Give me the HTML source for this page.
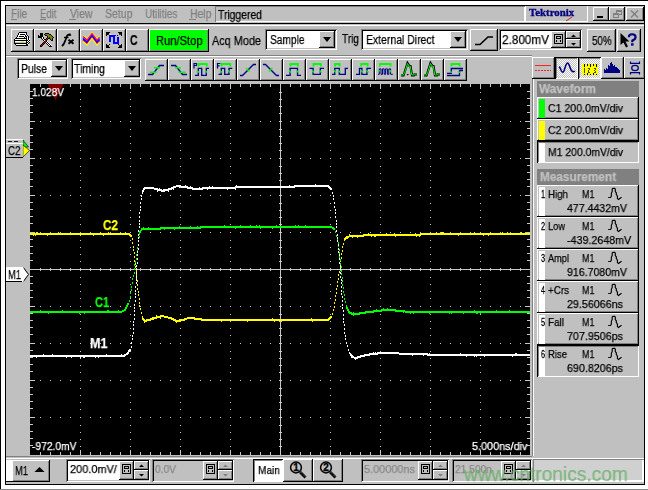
<!DOCTYPE html>
<html><head><meta charset="utf-8"><style>
html,body{margin:0;padding:0;background:#fff;}
body{width:648px;height:490px;position:relative;overflow:hidden;font-family:"Liberation Sans",sans-serif;}
body>div,body>span,body>svg{position:absolute;}
.t{white-space:nowrap;will-change:transform;-webkit-text-stroke-width:0.25px;}
</style></head><body>
<div style="left:0;top:0;width:648px;height:1px;background:#000"></div>
<div style="left:0;top:0;width:1px;height:490px;background:#000"></div>
<div style="left:0;top:489px;width:648px;height:1px;background:#888"></div>
<div style="left:5px;top:5px;width:640px;height:480px;background:#c0c0c0;box-shadow:inset 0 0 0 1px #000;"></div>
<span class="t" style="left:11.00px;top:8px;font-size:12.50px;line-height:12.50px;color:#808080;font-weight:normal;transform:scaleX(0.7950);transform-origin:0 0;">File</span>
<span class="t" style="left:40.00px;top:8px;font-size:12.50px;line-height:12.50px;color:#808080;font-weight:normal;transform:scaleX(0.7652);transform-origin:0 0;">Edit</span>
<span class="t" style="left:69.50px;top:8px;font-size:12.50px;line-height:12.50px;color:#808080;font-weight:normal;transform:scaleX(0.8372);transform-origin:0 0;">View</span>
<span class="t" style="left:104.50px;top:8px;font-size:12.50px;line-height:12.50px;color:#808080;font-weight:normal;transform:scaleX(0.8413);transform-origin:0 0;">Setup</span>
<span class="t" style="left:144.50px;top:8px;font-size:12.50px;line-height:12.50px;color:#808080;font-weight:normal;transform:scaleX(0.8062);transform-origin:0 0;">Utilities</span>
<span class="t" style="left:189.50px;top:8px;font-size:12.50px;line-height:12.50px;color:#808080;font-weight:normal;transform:scaleX(0.8370);transform-origin:0 0;">Help</span>
<div style="left:11px;top:19px;width:6px;height:1px;background:#808080"></div>
<div style="left:40px;top:19px;width:6px;height:1px;background:#808080"></div>
<div style="left:69px;top:19px;width:7px;height:1px;background:#808080"></div>
<div style="left:189px;top:19px;width:7px;height:1px;background:#808080"></div>
<div style="left:215px;top:6px;width:310px;height:16px;background:#c0c0c0;box-shadow:inset 1px 1px #808080,inset -1px -1px #fff;"></div>
<span class="t" style="left:218.00px;top:9px;font-size:12.50px;line-height:12.50px;color:#000;font-weight:normal;transform:scaleX(0.8292);transform-origin:0 0;">Triggered</span>
<div style="left:525px;top:6px;width:63px;height:16px;background:#c0c0c0;box-shadow:inset 1px 0 #fff,inset -1px 0 #fff,inset 0 -1px #fff;"></div>
<span class="t" style="left:528.50px;top:8px;font-size:10.60px;line-height:10.60px;color:#000080;font-weight:bold;transform:scaleX(1.0233);transform-origin:0 0;font-family:'Liberation Serif',serif;-webkit-text-stroke:0.3px #000080;">Tektronix</span>
<svg style="left:565px;top:16px" width="8" height="6"><line x1="1" y1="5" x2="7" y2="1" stroke="#e02020" stroke-width="1"/></svg>
<div style="left:593px;top:7px;width:16px;height:14px;background:#c0c0c0;box-shadow:inset -1px -1px #000,inset 1px 1px #fff,inset -2px -2px #808080;"></div>
<div style="left:609px;top:7px;width:16px;height:14px;background:#c0c0c0;box-shadow:inset -1px -1px #000,inset 1px 1px #fff,inset -2px -2px #808080;"></div>
<div style="left:626px;top:7px;width:18px;height:14px;background:#c0c0c0;box-shadow:inset -1px -1px #000,inset 1px 1px #fff,inset -2px -2px #808080;"></div>
<div style="left:597px;top:16px;width:6px;height:2px;background:#000"></div>
<svg style="left:609px;top:7px;" width="16" height="14" viewBox="0 0 16 14"><g fill="none" stroke="#808080" stroke-width="1" shape-rendering="crispEdges"><rect x="7.5" y="3.5" width="5" height="4"/><rect x="4.5" y="6.5" width="5" height="4" fill="#c0c0c0"/><line x1="7" y1="4.5" x2="13" y2="4.5"/><line x1="4" y1="7.5" x2="10" y2="7.5"/></g></svg>
<svg style="left:626px;top:7px;" width="18" height="14" viewBox="0 0 18 14"><g stroke="#808080" stroke-width="1.4"><line x1="5" y1="3.5" x2="12" y2="10.5"/><line x1="12" y1="3.5" x2="5" y2="10.5"/></g></svg>
<div style="left:6px;top:23px;width:638px;height:1px;background:#000"></div>
<div style="left:6px;top:25px;width:638px;height:1px;background:#fff"></div>
<div style="left:11px;top:29px;width:23px;height:23px;background:#c0c0c0;box-shadow:inset -1px -1px #000,inset 1px 1px #fff,inset -2px -2px #808080;"></div>
<div style="left:34px;top:29px;width:23px;height:23px;background:#c0c0c0;box-shadow:inset -1px -1px #000,inset 1px 1px #fff,inset -2px -2px #808080;"></div>
<div style="left:57px;top:29px;width:23px;height:23px;background:#c0c0c0;box-shadow:inset -1px -1px #000,inset 1px 1px #fff,inset -2px -2px #808080;"></div>
<div style="left:80px;top:29px;width:23px;height:23px;background:#c0c0c0;box-shadow:inset -1px -1px #000,inset 1px 1px #fff,inset -2px -2px #808080;"></div>
<div style="left:103px;top:29px;width:23px;height:23px;background:#c0c0c0;box-shadow:inset -1px -1px #000,inset 1px 1px #fff,inset -2px -2px #808080;"></div>
<div style="left:126px;top:29px;width:23px;height:23px;background:#c0c0c0;box-shadow:inset -1px -1px #000,inset 1px 1px #fff,inset -2px -2px #808080;"></div>
<svg style="left:11px;top:29px;" width="19" height="17" viewBox="0 0 19 17"><g shape-rendering="crispEdges"><rect x="8" y="3" width="8" height="1" fill="#000"/><rect x="7" y="4" width="1" height="1" fill="#000"/><rect x="8" y="4" width="7" height="1" fill="#fff"/><rect x="15" y="4" width="1" height="1" fill="#000"/><rect x="7" y="5" width="1" height="1" fill="#000"/><rect x="8" y="5" width="1" height="1" fill="#fff"/><rect x="9" y="5" width="5" height="1" fill="#000"/><rect x="14" y="5" width="1" height="1" fill="#fff"/><rect x="15" y="5" width="1" height="1" fill="#000"/><rect x="6" y="6" width="1" height="1" fill="#000"/><rect x="7" y="6" width="7" height="1" fill="#fff"/><rect x="14" y="6" width="1" height="1" fill="#000"/><rect x="15" y="6" width="1" height="1" fill="#fff"/><rect x="16" y="6" width="1" height="1" fill="#000"/><rect x="6" y="7" width="1" height="1" fill="#000"/><rect x="7" y="7" width="1" height="1" fill="#fff"/><rect x="8" y="7" width="5" height="1" fill="#000"/><rect x="13" y="7" width="1" height="1" fill="#fff"/><rect x="14" y="7" width="2" height="1" fill="#000"/><rect x="16" y="7" width="1" height="1" fill="#fff"/><rect x="17" y="7" width="1" height="1" fill="#000"/><rect x="5" y="8" width="1" height="1" fill="#000"/><rect x="6" y="8" width="7" height="1" fill="#fff"/><rect x="13" y="8" width="1" height="1" fill="#000"/><rect x="14" y="8" width="1" height="1" fill="#fff"/><rect x="15" y="8" width="1" height="1" fill="#000"/><rect x="16" y="8" width="1" height="1" fill="#fff"/><rect x="17" y="8" width="1" height="1" fill="#000"/><rect x="4" y="9" width="12" height="1" fill="#000"/><rect x="16" y="9" width="1" height="1" fill="#fff"/><rect x="17" y="9" width="1" height="1" fill="#000"/><rect x="18" y="9" width="1" height="1" fill="#fff"/><rect x="3" y="10" width="1" height="1" fill="#000"/><rect x="4" y="10" width="11" height="1" fill="#fff"/><rect x="15" y="10" width="1" height="1" fill="#000"/><rect x="16" y="10" width="1" height="1" fill="#fff"/><rect x="17" y="10" width="1" height="1" fill="#000"/><rect x="18" y="10" width="1" height="1" fill="#fff"/><rect x="3" y="11" width="14" height="1" fill="#000"/><rect x="17" y="11" width="1" height="1" fill="#fff"/><rect x="18" y="11" width="1" height="1" fill="#000"/><rect x="3" y="12" width="1" height="1" fill="#000"/><rect x="4" y="12" width="6" height="1" fill="#fff"/><rect x="10" y="12" width="3" height="1" fill="#ffff00"/><rect x="13" y="12" width="2" height="1" fill="#fff"/><rect x="15" y="12" width="1" height="1" fill="#000"/><rect x="16" y="12" width="1" height="1" fill="#fff"/><rect x="17" y="12" width="1" height="1" fill="#000"/><rect x="18" y="12" width="1" height="1" fill="#fff"/><rect x="3" y="13" width="1" height="1" fill="#000"/><rect x="4" y="13" width="11" height="1" fill="#c0c0c0"/><rect x="15" y="13" width="2" height="1" fill="#000"/><rect x="17" y="13" width="1" height="1" fill="#fff"/><rect x="18" y="13" width="1" height="1" fill="#000"/><rect x="3" y="14" width="13" height="1" fill="#000"/><rect x="16" y="14" width="1" height="1" fill="#fff"/><rect x="17" y="14" width="1" height="1" fill="#000"/><rect x="4" y="15" width="1" height="1" fill="#000"/><rect x="5" y="15" width="10" height="1" fill="#fff"/><rect x="15" y="15" width="2" height="1" fill="#000"/><rect x="17" y="15" width="1" height="1" fill="#fff"/><rect x="5" y="16" width="12" height="1" fill="#000"/></g></svg>
<svg style="left:34px;top:29px;" width="20" height="18" viewBox="0 0 20 18"><g shape-rendering="crispEdges"><rect x="6" y="4" width="3" height="1" fill="#000"/><rect x="11" y="4" width="4" height="1" fill="#000"/><rect x="6" y="5" width="3" height="1" fill="#000"/><rect x="10" y="5" width="1" height="1" fill="#000"/><rect x="11" y="5" width="4" height="1" fill="#808000"/><rect x="15" y="5" width="2" height="1" fill="#000"/><rect x="4" y="6" width="1" height="1" fill="#000"/><rect x="6" y="6" width="3" height="1" fill="#000"/><rect x="11" y="6" width="2" height="1" fill="#000"/><rect x="13" y="6" width="4" height="1" fill="#808000"/><rect x="17" y="6" width="1" height="1" fill="#000"/><rect x="4" y="7" width="5" height="1" fill="#000"/><rect x="13" y="7" width="1" height="1" fill="#000"/><rect x="14" y="7" width="4" height="1" fill="#808000"/><rect x="18" y="7" width="1" height="1" fill="#000"/><rect x="4" y="8" width="4" height="1" fill="#000"/><rect x="8" y="8" width="1" height="1" fill="#fff"/><rect x="9" y="8" width="1" height="1" fill="#000"/><rect x="13" y="8" width="1" height="1" fill="#000"/><rect x="14" y="8" width="1" height="1" fill="#808000"/><rect x="15" y="8" width="1" height="1" fill="#000"/><rect x="16" y="8" width="3" height="1" fill="#808000"/><rect x="19" y="8" width="1" height="1" fill="#000"/><rect x="7" y="9" width="1" height="1" fill="#000"/><rect x="8" y="9" width="1" height="1" fill="#fff"/><rect x="9" y="9" width="1" height="1" fill="#000"/><rect x="12" y="9" width="1" height="1" fill="#000"/><rect x="13" y="9" width="1" height="1" fill="#c00000"/><rect x="14" y="9" width="2" height="1" fill="#000"/><rect x="16" y="9" width="2" height="1" fill="#808000"/><rect x="18" y="9" width="1" height="1" fill="#000"/><rect x="8" y="10" width="1" height="1" fill="#000"/><rect x="9" y="10" width="1" height="1" fill="#fff"/><rect x="10" y="10" width="2" height="1" fill="#000"/><rect x="12" y="10" width="1" height="1" fill="#c00000"/><rect x="13" y="10" width="1" height="1" fill="#000"/><rect x="16" y="10" width="1" height="1" fill="#000"/><rect x="17" y="10" width="1" height="1" fill="#808000"/><rect x="18" y="10" width="1" height="1" fill="#000"/><rect x="9" y="11" width="1" height="1" fill="#000"/><rect x="10" y="11" width="1" height="1" fill="#fff"/><rect x="11" y="11" width="1" height="1" fill="#c00000"/><rect x="12" y="11" width="1" height="1" fill="#000"/><rect x="17" y="11" width="2" height="1" fill="#000"/><rect x="10" y="12" width="1" height="1" fill="#000"/><rect x="11" y="12" width="1" height="1" fill="#c00000"/><rect x="12" y="12" width="1" height="1" fill="#000"/><rect x="13" y="12" width="1" height="1" fill="#fff"/><rect x="9" y="13" width="1" height="1" fill="#000"/><rect x="10" y="13" width="1" height="1" fill="#c00000"/><rect x="11" y="13" width="1" height="1" fill="#000"/><rect x="12" y="13" width="1" height="1" fill="#fff"/><rect x="13" y="13" width="1" height="1" fill="#000"/><rect x="14" y="13" width="1" height="1" fill="#fff"/><rect x="8" y="14" width="1" height="1" fill="#000"/><rect x="9" y="14" width="1" height="1" fill="#c00000"/><rect x="10" y="14" width="1" height="1" fill="#000"/><rect x="12" y="14" width="1" height="1" fill="#000"/><rect x="13" y="14" width="1" height="1" fill="#fff"/><rect x="14" y="14" width="1" height="1" fill="#000"/><rect x="15" y="14" width="1" height="1" fill="#fff"/><rect x="7" y="15" width="1" height="1" fill="#000"/><rect x="8" y="15" width="1" height="1" fill="#c00000"/><rect x="9" y="15" width="1" height="1" fill="#000"/><rect x="13" y="15" width="1" height="1" fill="#000"/><rect x="14" y="15" width="1" height="1" fill="#fff"/><rect x="15" y="15" width="1" height="1" fill="#000"/><rect x="16" y="15" width="1" height="1" fill="#fff"/><rect x="6" y="16" width="1" height="1" fill="#000"/><rect x="7" y="16" width="1" height="1" fill="#c00000"/><rect x="8" y="16" width="1" height="1" fill="#000"/><rect x="14" y="16" width="1" height="1" fill="#000"/><rect x="15" y="16" width="1" height="1" fill="#fff"/><rect x="16" y="16" width="1" height="1" fill="#000"/><rect x="17" y="16" width="1" height="1" fill="#fff"/><rect x="6" y="17" width="2" height="1" fill="#000"/><rect x="15" y="17" width="3" height="1" fill="#000"/></g></svg>
<svg style="left:57px;top:29px;" width="23" height="23" viewBox="0 0 23 23"><g fill="none" stroke="#000"><path d="M5 17 L6.5 15.5 L8.5 11 L10 7 Q11 5.3 13 5.5 L13.5 6.8" stroke-width="1.8"/><path d="M7 8.5H11.5" stroke-width="1.3"/><path d="M11.5 10.8 L16.5 14.8 M16.5 10.8 L11.5 14.8" stroke-width="2"/></g></svg>
<svg style="left:80px;top:29px;" width="23" height="23" viewBox="0 0 23 23"><polyline points="3,6.5 7,10 12,3.5 17,10 19.5,7" fill="none" stroke="#ffff00" stroke-width="1.15"/><polyline points="3,7.5 7,11 12,4.5 17,11 19.5,8" fill="none" stroke="#ff0000" stroke-width="1.15"/><polyline points="3,8.5 7,12 12,5.5 17,12 19.5,9" fill="none" stroke="#ff00ff" stroke-width="1.15"/><polyline points="3,9.5 7,13 12,6.5 17,13 19.5,10" fill="none" stroke="#0000ff" stroke-width="1.15"/><polyline points="3,10.5 7,14 12,7.5 17,14 19.5,11" fill="none" stroke="#0000ff" stroke-width="1.15"/><polyline points="3,11.5 7,15 12,8.5 17,15 19.5,12" fill="none" stroke="#ff0000" stroke-width="1.15"/><polyline points="3,12.5 7,16 12,9.5 17,16 19.5,13" fill="none" stroke="#ffff00" stroke-width="1.15"/></svg>
<svg style="left:103px;top:29px;" width="19" height="19" viewBox="0 0 19 19"><g shape-rendering="crispEdges"><rect x="3" y="3" width="4" height="1" fill="#000"/><rect x="15" y="3" width="4" height="1" fill="#000"/><rect x="3" y="4" width="3" height="1" fill="#000"/><rect x="16" y="4" width="3" height="1" fill="#000"/><rect x="3" y="5" width="3" height="1" fill="#000"/><rect x="7" y="5" width="1" height="1" fill="#fff"/><rect x="16" y="5" width="3" height="1" fill="#000"/><rect x="3" y="6" width="1" height="1" fill="#000"/><rect x="6" y="6" width="1" height="1" fill="#000"/><rect x="7" y="6" width="6" height="1" fill="#0000ff"/><rect x="14" y="6" width="1" height="1" fill="#000"/><rect x="18" y="6" width="1" height="1" fill="#000"/><rect x="6" y="7" width="6" height="1" fill="#0000ff"/><rect x="6" y="8" width="2" height="1" fill="#0000ff"/><rect x="10" y="8" width="2" height="1" fill="#0000ff"/><rect x="14" y="8" width="2" height="1" fill="#0000ff"/><rect x="6" y="9" width="2" height="1" fill="#0000ff"/><rect x="10" y="9" width="2" height="1" fill="#0000ff"/><rect x="14" y="9" width="2" height="1" fill="#0000ff"/><rect x="6" y="10" width="2" height="1" fill="#0000ff"/><rect x="10" y="10" width="2" height="1" fill="#0000ff"/><rect x="14" y="10" width="2" height="1" fill="#0000ff"/><rect x="6" y="11" width="2" height="1" fill="#0000ff"/><rect x="10" y="11" width="2" height="1" fill="#0000ff"/><rect x="14" y="11" width="2" height="1" fill="#0000ff"/><rect x="6" y="12" width="2" height="1" fill="#0000ff"/><rect x="10" y="12" width="2" height="1" fill="#0000ff"/><rect x="14" y="12" width="2" height="1" fill="#0000ff"/><rect x="10" y="13" width="6" height="1" fill="#0000ff"/><rect x="10" y="14" width="6" height="1" fill="#0000ff"/><rect x="3" y="15" width="1" height="1" fill="#000"/><rect x="6" y="15" width="1" height="1" fill="#000"/><rect x="15" y="15" width="1" height="1" fill="#000"/><rect x="18" y="15" width="1" height="1" fill="#000"/><rect x="3" y="16" width="3" height="1" fill="#000"/><rect x="16" y="16" width="3" height="1" fill="#000"/><rect x="3" y="17" width="3" height="1" fill="#000"/><rect x="16" y="17" width="3" height="1" fill="#000"/><rect x="3" y="18" width="4" height="1" fill="#000"/><rect x="15" y="18" width="4" height="1" fill="#000"/></g></svg>
<svg style="left:103px;top:29px;opacity:0.35" width="23" height="23" viewBox="0 0 23 23"><rect x="5.5" y="5.5" width="12" height="11" fill="none" stroke="#e8dcb0" stroke-width="0.7"/></svg>
<span class="t" style="left:130.00px;top:33px;font-size:14.20px;line-height:14.20px;color:#000;font-weight:bold;transform:scaleX(0.7336);transform-origin:0 0;">C</span>
<div style="left:149px;top:29px;width:60px;height:23px;background:#00ff00;box-shadow:inset -1px -1px #000,inset 1px 1px #fff,inset -2px -2px #808080;"></div>
<span class="t" style="left:155.50px;top:35px;font-size:12.50px;line-height:12.50px;color:#000;font-weight:normal;transform:scaleX(0.8921);transform-origin:0 0;">Run/Stop</span>
<span class="t" style="left:212.00px;top:35px;font-size:12.50px;line-height:12.50px;color:#000;font-weight:normal;transform:scaleX(0.8701);transform-origin:0 0;">Acq Mode</span>
<div style="left:265px;top:29px;width:72px;height:21px;background:#fff;box-shadow:inset 1px 1px #808080,inset -1px -1px #fff,inset 2px 2px #000,inset -2px -2px #c0c0c0;"></div>
<span class="t" style="left:269.50px;top:34px;font-size:12.50px;line-height:12.50px;color:#000;font-weight:normal;transform:scaleX(0.8142);transform-origin:0 0;">Sample</span>
<div style="left:319px;top:31px;width:16px;height:17px;background:#c0c0c0;box-shadow:inset -1px -1px #000,inset 1px 1px #fff,inset -2px -2px #808080;"></div>
<svg style="left:319px;top:31px;" width="16" height="17" viewBox="0 0 16 17"><path d="M4 6h8l-4 5z" fill="#000"/></svg>
<span class="t" style="left:342.00px;top:33px;font-size:12.50px;line-height:12.50px;color:#000;font-weight:normal;transform:scaleX(0.8071);transform-origin:0 0;">Trig</span>
<div style="left:361px;top:29px;width:107px;height:21px;background:#fff;box-shadow:inset 1px 1px #808080,inset -1px -1px #fff,inset 2px 2px #000,inset -2px -2px #c0c0c0;"></div>
<span class="t" style="left:366.00px;top:34px;font-size:12.50px;line-height:12.50px;color:#000;font-weight:normal;transform:scaleX(0.8354);transform-origin:0 0;">External Direct</span>
<div style="left:450px;top:31px;width:16px;height:17px;background:#c0c0c0;box-shadow:inset -1px -1px #000,inset 1px 1px #fff,inset -2px -2px #808080;"></div>
<svg style="left:450px;top:31px;" width="16" height="17" viewBox="0 0 16 17"><path d="M4 6h8l-4 5z" fill="#000"/></svg>
<div style="left:470px;top:29px;width:28px;height:22px;background:#c0c0c0;box-shadow:inset -1px -1px #000,inset 1px 1px #fff,inset -2px -2px #808080;"></div>
<svg style="left:470px;top:29px;" width="28" height="22" viewBox="0 0 28 22"><path d="M5 15.5H10L18 8H23" fill="none" stroke="#000" stroke-width="1.6"/></svg>
<div style="left:499px;top:29px;width:83px;height:21px;background:#fff;box-shadow:inset 1px 1px #808080,inset -1px -1px #fff,inset 2px 2px #000,inset -2px -2px #c0c0c0;"></div>
<span class="t" style="left:502.00px;top:34px;font-size:12.50px;line-height:12.50px;color:#000;font-weight:normal;transform:scaleX(0.9388);transform-origin:0 0;">2.800mV</span>
<div style="left:551px;top:31px;width:15px;height:17px;background:#c0c0c0;box-shadow:inset -1px -1px #000,inset 1px 1px #fff,inset -2px -2px #808080;"></div>
<svg style="left:551px;top:31px;" width="15" height="17" viewBox="0 0 15 17"><g shape-rendering="crispEdges" fill="none" stroke="#000"><rect x="3.5" y="3.5" width="8" height="9"/><rect x="5.5" y="5.5" width="4" height="2"/></g><rect x="5" y="9" width="1" height="2" fill="#000"/><rect x="9" y="9" width="1" height="2" fill="#000"/></svg>
<div style="left:566px;top:31px;width:15px;height:8px;background:#c0c0c0;box-shadow:inset -1px -1px #000,inset 1px 1px #fff,inset -2px -2px #808080;"></div>
<div style="left:566px;top:39px;width:15px;height:9px;background:#c0c0c0;box-shadow:inset -1px -1px #000,inset 1px 1px #fff,inset -2px -2px #808080;"></div>
<svg style="left:566px;top:31px;" width="15" height="17" viewBox="0 0 15 17"><path d="M5 6h5l-2.5-2.5z M5 12h5l-2.5 2.5z" fill="#000"/></svg>
<div style="left:587px;top:29px;width:29px;height:23px;background:#c0c0c0;box-shadow:inset -1px -1px #000,inset 1px 1px #fff,inset -2px -2px #808080;"></div>
<span class="t" style="left:592.00px;top:35px;font-size:12.50px;line-height:12.50px;color:#000;font-weight:normal;transform:scaleX(0.7800);transform-origin:0 0;">50%</span>
<div style="left:617px;top:29px;width:24px;height:23px;background:#c0c0c0;box-shadow:inset -1px -1px #000,inset 1px 1px #fff,inset -2px -2px #808080;"></div>
<svg style="left:617px;top:29px;" width="24" height="23" viewBox="0 0 24 23"><path d="M3.5 4 L3.5 16 L6.5 13.5 L9 18.5 L11 17.5 L8.5 12.5 L12.5 12.5 Z" fill="#000"/></svg>
<svg style="left:617px;top:29px;" width="24" height="23" viewBox="0 0 24 23"><path d="M11.8 8.3Q11.8 5.3 15 5.3Q18.6 5.3 18.6 8.3Q18.6 10.3 15.3 11.6V13.3" fill="none" stroke="#000080" stroke-width="2.1"/><rect x="14" y="14.3" width="2.6" height="2.3" fill="#000080"/></svg>
<div style="left:6px;top:55px;width:526px;height:1px;background:#808080"></div>
<div style="left:6px;top:56px;width:526px;height:1px;background:#fff"></div>
<div style="left:17px;top:58px;width:51px;height:21px;background:#fff;box-shadow:inset 1px 1px #808080,inset -1px -1px #fff,inset 2px 2px #000,inset -2px -2px #c0c0c0;"></div>
<span class="t" style="left:20.50px;top:63px;font-size:12.50px;line-height:12.50px;color:#000;font-weight:normal;transform:scaleX(0.8320);transform-origin:0 0;">Pulse</span>
<div style="left:51px;top:60px;width:16px;height:17px;background:#c0c0c0;box-shadow:inset -1px -1px #000,inset 1px 1px #fff,inset -2px -2px #808080;"></div>
<svg style="left:51px;top:60px;" width="16" height="17" viewBox="0 0 16 17"><path d="M4 6h8l-4 5z" fill="#000"/></svg>
<div style="left:71px;top:58px;width:70px;height:21px;background:#fff;box-shadow:inset 1px 1px #808080,inset -1px -1px #fff,inset 2px 2px #000,inset -2px -2px #c0c0c0;"></div>
<span class="t" style="left:74.00px;top:63px;font-size:12.50px;line-height:12.50px;color:#000;font-weight:normal;transform:scaleX(0.8364);transform-origin:0 0;">Timing</span>
<div style="left:124px;top:60px;width:16px;height:17px;background:#c0c0c0;box-shadow:inset -1px -1px #000,inset 1px 1px #fff,inset -2px -2px #808080;"></div>
<svg style="left:124px;top:60px;" width="16" height="17" viewBox="0 0 16 17"><path d="M4 6h8l-4 5z" fill="#000"/></svg>
<div style="left:145px;top:59px;width:23px;height:22px;background:#c0c0c0;box-shadow:inset -1px -1px #000,inset 1px 1px #fff,inset -2px -2px #808080;"></div>
<svg style="left:145px;top:59px;" width="23" height="22" viewBox="0 0 23 22"><path d="M3 15.5H7.5L14.5 6.5H19" fill="none" stroke="#000080" stroke-width="1.3" stroke-linejoin="miter"/><path d="M9 8.7H15M5 13.3H11.5" fill="none" stroke="#00ff00" stroke-width="1.6"/></svg>
<div style="left:168px;top:59px;width:23px;height:22px;background:#c0c0c0;box-shadow:inset -1px -1px #000,inset 1px 1px #fff,inset -2px -2px #808080;"></div>
<svg style="left:168px;top:59px;" width="23" height="22" viewBox="0 0 23 22"><path d="M3 6.5H7.5L14.5 15.5H19" fill="none" stroke="#000080" stroke-width="1.3" stroke-linejoin="miter"/><path d="M7 8.7H13M10.5 13.3H17.5" fill="none" stroke="#00ff00" stroke-width="1.6"/></svg>
<div style="left:191px;top:59px;width:23px;height:22px;background:#c0c0c0;box-shadow:inset -1px -1px #000,inset 1px 1px #fff,inset -2px -2px #808080;"></div>
<svg style="left:191px;top:59px;" width="23" height="22" viewBox="0 0 23 22"><path d="M3 9.5V4.5H5.5V6.5H3.5" fill="none" stroke="#000080" stroke-width="1.2"/><path d="M4 16.3H7.3V9.3H10.7V16.3H15.3V9.3H18" fill="none" stroke="#000080" stroke-width="1.3" stroke-linejoin="miter"/><path d="M7.5 7.5V5H15.7V7.5" fill="none" stroke="#00ff00" stroke-width="1.8"/><path d="M6 11.5L8 13.5M14 11.5L16 13.5" fill="none" stroke="#00ff00" stroke-width="1.4"/></svg>
<div style="left:214px;top:59px;width:23px;height:22px;background:#c0c0c0;box-shadow:inset -1px -1px #000,inset 1px 1px #fff,inset -2px -2px #808080;"></div>
<svg style="left:214px;top:59px;" width="23" height="22" viewBox="0 0 23 22"><path d="M3.5 9.5V4.5H6.5M3.5 6.8H5.5" fill="none" stroke="#000080" stroke-width="1.2"/><path d="M4.5 15.3H7.3V9.3H10.7V15.3H15V9.3H18.3" fill="none" stroke="#000080" stroke-width="1.3" stroke-linejoin="miter"/><path d="M7.5 7.5V5H16.3V7.5" fill="none" stroke="#00ff00" stroke-width="1.8"/><path d="M6 11.5L8 13.5M14 11.5L16 13.5" fill="none" stroke="#00ff00" stroke-width="1.4"/></svg>
<div style="left:237px;top:59px;width:23px;height:22px;background:#c0c0c0;box-shadow:inset -1px -1px #000,inset 1px 1px #fff,inset -2px -2px #808080;"></div>
<svg style="left:237px;top:59px;" width="23" height="22" viewBox="0 0 23 22"><path d="M3 16.5H5.5L16.5 5.5H19" fill="none" stroke="#000080" stroke-width="1.3" stroke-linejoin="miter"/><path d="M9 9L12.5 12.5" fill="none" stroke="#00ff00" stroke-width="1.5"/></svg>
<div style="left:260px;top:59px;width:23px;height:22px;background:#c0c0c0;box-shadow:inset -1px -1px #000,inset 1px 1px #fff,inset -2px -2px #808080;"></div>
<svg style="left:260px;top:59px;" width="23" height="22" viewBox="0 0 23 22"><path d="M3 5.5H5.5L16.5 16.5H19" fill="none" stroke="#000080" stroke-width="1.3" stroke-linejoin="miter"/><path d="M9 12.5L12.5 9" fill="none" stroke="#00ff00" stroke-width="1.5"/></svg>
<div style="left:283px;top:59px;width:23px;height:22px;background:#c0c0c0;box-shadow:inset -1px -1px #000,inset 1px 1px #fff,inset -2px -2px #808080;"></div>
<svg style="left:283px;top:59px;" width="23" height="22" viewBox="0 0 23 22"><path d="M3 16.3H7.1V9.3H14.5V16.3H18" fill="none" stroke="#000080" stroke-width="1.3" stroke-linejoin="miter"/><path d="M7.5 7.5V5H14.9V7.5" fill="none" stroke="#00ff00" stroke-width="1.8"/><path d="M6 11.5L8 13.5M13.5 11.5L15.5 13.5" fill="none" stroke="#00ff00" stroke-width="1.4"/></svg>
<div style="left:306px;top:59px;width:23px;height:22px;background:#c0c0c0;box-shadow:inset -1px -1px #000,inset 1px 1px #fff,inset -2px -2px #808080;"></div>
<svg style="left:306px;top:59px;" width="23" height="22" viewBox="0 0 23 22"><path d="M3.5 9.3H7.1V15.3H14.3V9.3H18" fill="none" stroke="#000080" stroke-width="1.3" stroke-linejoin="miter"/><path d="M7.5 7.5V5H14.9V7.5" fill="none" stroke="#00ff00" stroke-width="1.8"/><path d="M6 11.5L8 13.5M13.5 11.5L15.5 13.5" fill="none" stroke="#00ff00" stroke-width="1.4"/></svg>
<div style="left:329px;top:59px;width:23px;height:22px;background:#c0c0c0;box-shadow:inset -1px -1px #000,inset 1px 1px #fff,inset -2px -2px #808080;"></div>
<svg style="left:329px;top:59px;" width="23" height="22" viewBox="0 0 23 22"><path d="M3 15.3H5.8V9.3H10.3V15.3H16.3V9.3H19" fill="none" stroke="#000080" stroke-width="1.3" stroke-linejoin="miter"/><path d="M6 7.5V5H10.6V7.5" fill="none" stroke="#00ff00" stroke-width="1.8"/><path d="M5 11.5L7 13.5M9.5 11.5L11.5 13.5" fill="none" stroke="#00ff00" stroke-width="1.4"/></svg>
<div style="left:352px;top:59px;width:23px;height:22px;background:#c0c0c0;box-shadow:inset -1px -1px #000,inset 1px 1px #fff,inset -2px -2px #808080;"></div>
<svg style="left:352px;top:59px;" width="23" height="22" viewBox="0 0 23 22"><path d="M4 15.3H7.5V9.3H9.9V15.3H15V9.3H19" fill="none" stroke="#000080" stroke-width="1.3" stroke-linejoin="miter"/><path d="M9.2 7.5V5H15.6V7.5" fill="none" stroke="#00ff00" stroke-width="1.8"/><path d="M9 11.5L11 13.5M14.5 11.5L16.5 13.5" fill="none" stroke="#00ff00" stroke-width="1.4"/></svg>
<div style="left:375px;top:59px;width:23px;height:22px;background:#c0c0c0;box-shadow:inset -1px -1px #000,inset 1px 1px #fff,inset -2px -2px #808080;"></div>
<svg style="left:375px;top:59px;" width="23" height="22" viewBox="0 0 23 22"><path d="M3 15.3H4.3V9.9H6V15.3H7.5V9.9H9.2V15.3H10.6V9.9H12.4V15.3H13.8V9.9H15.6V15.3H17.8" fill="none" stroke="#000080" stroke-width="1"/><path d="M5 7.5V5H15.6V7.5" fill="none" stroke="#00ff00" stroke-width="1.8"/><path d="M3.5 11L4.5 12.5M15 11.5L16 13" fill="none" stroke="#00ff00" stroke-width="1.4"/></svg>
<div style="left:398px;top:59px;width:23px;height:22px;background:#c0c0c0;box-shadow:inset -1px -1px #000,inset 1px 1px #fff,inset -2px -2px #808080;"></div>
<svg style="left:398px;top:59px;" width="23" height="22" viewBox="0 0 23 22"><path d="M3 16.3H5.5L6.5 13.5L9.5 4L11.5 7H12.5L14 16.3H16L16.5 15.3H19" fill="none" stroke="#000" stroke-width="2.2"/><path d="M3 16H5.5L6.8 13.2L9.5 4.5L11.3 7.3H12.3L13.8 16H16L16.5 15H19" fill="none" stroke="#00ff00" stroke-width="1"/><path d="M8.5 15H11L9.7 16.5Z" fill="#000"/></svg>
<div style="left:421px;top:59px;width:23px;height:22px;background:#c0c0c0;box-shadow:inset -1px -1px #000,inset 1px 1px #fff,inset -2px -2px #808080;"></div>
<svg style="left:421px;top:59px;" width="23" height="22" viewBox="0 0 23 22"><path d="M3 16.3H5.5L6.5 13.5L9.5 4L11.5 7H12.5L14 16.3H16L16.5 15.3H19" fill="none" stroke="#000" stroke-width="2.2"/><path d="M3 16H5.5L6.8 13.2L9.5 4.5L11.3 7.3H12.3L13.8 16H16L16.5 15H19" fill="none" stroke="#00ff00" stroke-width="1"/></svg>
<div style="left:444px;top:59px;width:23px;height:22px;background:#c0c0c0;box-shadow:inset -1px -1px #000,inset 1px 1px #fff,inset -2px -2px #808080;"></div>
<svg style="left:444px;top:59px;" width="23" height="22" viewBox="0 0 23 22"><path d="M3 14.3H7.3V9.5H19M15.3 11.5H19M3 16.5H15.5V11.5" fill="none" stroke="#000080" stroke-width="1.3" stroke-linejoin="miter"/><path d="M7.5 7.5V5H15.6V7.5" fill="none" stroke="#00ff00" stroke-width="1.8"/><path d="M6.5 12L7.5 14M14.5 12L15.5 14" fill="none" stroke="#00ff00" stroke-width="1.4"/></svg>
<div style="left:532px;top:57px;width:23px;height:22px;background:#c0c0c0;box-shadow:inset -1px -1px #000,inset 1px 1px #fff,inset -2px -2px #808080;"></div>
<svg style="left:532px;top:57px;" width="23" height="22" viewBox="0 0 23 22"><g shape-rendering="crispEdges"><rect x="3" y="8" width="16" height="1" fill="#ff2020"/><path d="M3 13h2v1h-2zM6 13h2v1h-2zM9 13h2v1h-2zM12 13h2v1h-2zM15 13h2v1h-2zM18 13h1v1h-1z" fill="#ff2020"/></g></svg>
<div style="left:555px;top:57px;width:23px;height:22px;background-color:#ffffff;background-image:linear-gradient(45deg,#c0c0c0 25%,transparent 25%,transparent 75%,#c0c0c0 75%),linear-gradient(45deg,#c0c0c0 25%,transparent 25%,transparent 75%,#c0c0c0 75%);background-size:2px 2px;background-position:0 0,1px 1px;box-shadow:inset 1px 1px #000,inset -1px -1px #fff,inset 2px 2px #808080;"></div>
<svg style="left:555px;top:57px;" width="23" height="22" viewBox="0 0 23 22"><path d="M4.3 9.5C5.5 11.5 6.5 15.5 8 15.3C9.5 15 10.5 6 12.5 6C14.3 6 15 12 16.5 13.5C17.5 14.8 18.5 15.2 19.8 14" fill="none" stroke="#000080" stroke-width="1.6"/></svg>
<div style="left:578px;top:57px;width:23px;height:22px;background-color:#ffffff;background-image:linear-gradient(45deg,#c0c0c0 25%,transparent 25%,transparent 75%,#c0c0c0 75%),linear-gradient(45deg,#c0c0c0 25%,transparent 25%,transparent 75%,#c0c0c0 75%);background-size:2px 2px;background-position:0 0,1px 1px;box-shadow:inset 1px 1px #000,inset -1px -1px #fff,inset 2px 2px #808080;"></div>
<svg style="left:578px;top:57px;" width="21" height="19" viewBox="0 0 21 19"><g shape-rendering="crispEdges"><rect x="4" y="7" width="2" height="1" fill="#ffff00"/><rect x="6" y="7" width="1" height="1" fill="#000"/><rect x="7" y="7" width="2" height="1" fill="#ffff00"/><rect x="9" y="7" width="1" height="1" fill="#000"/><rect x="10" y="7" width="2" height="1" fill="#ffff00"/><rect x="12" y="7" width="1" height="1" fill="#000"/><rect x="13" y="7" width="2" height="1" fill="#ffff00"/><rect x="15" y="7" width="1" height="1" fill="#000"/><rect x="16" y="7" width="2" height="1" fill="#ffff00"/><rect x="18" y="7" width="1" height="1" fill="#000"/><rect x="19" y="7" width="1" height="1" fill="#ffff00"/><rect x="4" y="8" width="2" height="1" fill="#ffff00"/><rect x="6" y="8" width="1" height="1" fill="#000"/><rect x="7" y="8" width="2" height="1" fill="#ffff00"/><rect x="9" y="8" width="1" height="1" fill="#000"/><rect x="10" y="8" width="2" height="1" fill="#ffff00"/><rect x="12" y="8" width="1" height="1" fill="#000"/><rect x="13" y="8" width="2" height="1" fill="#ffff00"/><rect x="15" y="8" width="1" height="1" fill="#000"/><rect x="16" y="8" width="2" height="1" fill="#ffff00"/><rect x="18" y="8" width="1" height="1" fill="#000"/><rect x="19" y="8" width="1" height="1" fill="#ffff00"/><rect x="4" y="9" width="2" height="1" fill="#ffff00"/><rect x="6" y="9" width="1" height="1" fill="#000"/><rect x="7" y="9" width="5" height="1" fill="#ffff00"/><rect x="12" y="9" width="1" height="1" fill="#000"/><rect x="13" y="9" width="5" height="1" fill="#ffff00"/><rect x="18" y="9" width="1" height="1" fill="#000"/><rect x="19" y="9" width="1" height="1" fill="#ffff00"/><rect x="4" y="10" width="16" height="1" fill="#ffff00"/><rect x="4" y="11" width="2" height="1" fill="#ffff00"/><rect x="6" y="11" width="1" height="1" fill="#505000"/><rect x="7" y="11" width="3" height="1" fill="#ffff00"/><rect x="10" y="11" width="2" height="1" fill="#505000"/><rect x="12" y="11" width="4" height="1" fill="#ffff00"/><rect x="16" y="11" width="2" height="1" fill="#505000"/><rect x="18" y="11" width="2" height="1" fill="#ffff00"/><rect x="4" y="12" width="2" height="1" fill="#ffff00"/><rect x="6" y="12" width="1" height="1" fill="#505000"/><rect x="7" y="12" width="4" height="1" fill="#ffff00"/><rect x="11" y="12" width="1" height="1" fill="#505000"/><rect x="12" y="12" width="5" height="1" fill="#ffff00"/><rect x="17" y="12" width="1" height="1" fill="#505000"/><rect x="18" y="12" width="2" height="1" fill="#ffff00"/><rect x="4" y="13" width="2" height="1" fill="#ffff00"/><rect x="6" y="13" width="1" height="1" fill="#505000"/><rect x="7" y="13" width="3" height="1" fill="#ffff00"/><rect x="10" y="13" width="1" height="1" fill="#505000"/><rect x="11" y="13" width="5" height="1" fill="#ffff00"/><rect x="16" y="13" width="1" height="1" fill="#505000"/><rect x="17" y="13" width="3" height="1" fill="#ffff00"/><rect x="4" y="14" width="2" height="1" fill="#ffff00"/><rect x="6" y="14" width="1" height="1" fill="#505000"/><rect x="7" y="14" width="3" height="1" fill="#ffff00"/><rect x="10" y="14" width="1" height="1" fill="#505000"/><rect x="11" y="14" width="6" height="1" fill="#ffff00"/><rect x="17" y="14" width="1" height="1" fill="#505000"/><rect x="18" y="14" width="2" height="1" fill="#ffff00"/><rect x="4" y="15" width="2" height="1" fill="#ffff00"/><rect x="6" y="15" width="1" height="1" fill="#505000"/><rect x="7" y="15" width="3" height="1" fill="#ffff00"/><rect x="10" y="15" width="2" height="1" fill="#505000"/><rect x="12" y="15" width="4" height="1" fill="#ffff00"/><rect x="16" y="15" width="2" height="1" fill="#505000"/><rect x="18" y="15" width="2" height="1" fill="#ffff00"/><rect x="4" y="16" width="5" height="1" fill="#ffff00"/><rect x="9" y="16" width="1" height="1" fill="#000"/><rect x="10" y="16" width="5" height="1" fill="#ffff00"/><rect x="15" y="16" width="1" height="1" fill="#000"/><rect x="16" y="16" width="4" height="1" fill="#ffff00"/><rect x="4" y="17" width="2" height="1" fill="#ffff00"/><rect x="6" y="17" width="1" height="1" fill="#000"/><rect x="7" y="17" width="2" height="1" fill="#ffff00"/><rect x="9" y="17" width="1" height="1" fill="#000"/><rect x="10" y="17" width="2" height="1" fill="#ffff00"/><rect x="12" y="17" width="1" height="1" fill="#000"/><rect x="13" y="17" width="2" height="1" fill="#ffff00"/><rect x="15" y="17" width="1" height="1" fill="#000"/><rect x="16" y="17" width="2" height="1" fill="#ffff00"/><rect x="18" y="17" width="1" height="1" fill="#000"/><rect x="19" y="17" width="1" height="1" fill="#ffff00"/></g></svg>
<div style="left:601px;top:57px;width:23px;height:22px;background:#c0c0c0;box-shadow:inset -1px -1px #000,inset 1px 1px #fff,inset -2px -2px #808080;"></div>
<svg style="left:601px;top:57px;" width="20" height="16" viewBox="0 0 20 16"><g shape-rendering="crispEdges"><rect x="10" y="5" width="1" height="1" fill="#000080"/><rect x="9" y="6" width="2" height="1" fill="#000080"/><rect x="9" y="7" width="3" height="1" fill="#000080"/><rect x="7" y="8" width="1" height="1" fill="#000080"/><rect x="9" y="8" width="3" height="1" fill="#000080"/><rect x="13" y="8" width="1" height="1" fill="#000080"/><rect x="7" y="9" width="7" height="1" fill="#000080"/><rect x="7" y="10" width="9" height="1" fill="#000080"/><rect x="5" y="11" width="1" height="1" fill="#000080"/><rect x="7" y="11" width="10" height="1" fill="#000080"/><rect x="3" y="12" width="1" height="1" fill="#000080"/><rect x="5" y="12" width="13" height="1" fill="#000080"/><rect x="3" y="13" width="16" height="1" fill="#000080"/><rect x="3" y="14" width="16" height="1" fill="#000080"/><rect x="3" y="15" width="16" height="1" fill="#000080"/></g></svg>
<div style="left:624px;top:57px;width:21px;height:22px;background:#c0c0c0;box-shadow:inset -1px -1px #000,inset 1px 1px #fff,inset -2px -2px #808080;"></div>
<svg style="left:624px;top:57px;" width="21" height="22" viewBox="0 0 21 22"><g fill="none" stroke="#000080" stroke-width="1.2"><path d="M6.5 4.5V6.3H15.5V4.5M6.5 17.5V15.7H15.5V17.5"/><ellipse cx="11" cy="11" rx="3.3" ry="2.6"/></g></svg>
<svg style="left:30px;top:84px" width="500" height="371" viewBox="30 84 500 371">
<rect x="30" y="84" width="500" height="371" fill="#000"/>
<g fill="#c8c8c8" shape-rendering="crispEdges"><rect x="40" y="84" width="1" height="3"/><rect x="40" y="452" width="1" height="3"/><rect x="50" y="84" width="1" height="3"/><rect x="50" y="452" width="1" height="3"/><rect x="60" y="84" width="1" height="3"/><rect x="60" y="452" width="1" height="3"/><rect x="70" y="84" width="1" height="3"/><rect x="70" y="452" width="1" height="3"/><rect x="80" y="84" width="1" height="5"/><rect x="80" y="450" width="1" height="5"/><rect x="90" y="84" width="1" height="3"/><rect x="90" y="452" width="1" height="3"/><rect x="100" y="84" width="1" height="3"/><rect x="100" y="452" width="1" height="3"/><rect x="110" y="84" width="1" height="3"/><rect x="110" y="452" width="1" height="3"/><rect x="120" y="84" width="1" height="3"/><rect x="120" y="452" width="1" height="3"/><rect x="130" y="84" width="1" height="5"/><rect x="130" y="450" width="1" height="5"/><rect x="140" y="84" width="1" height="3"/><rect x="140" y="452" width="1" height="3"/><rect x="150" y="84" width="1" height="3"/><rect x="150" y="452" width="1" height="3"/><rect x="160" y="84" width="1" height="3"/><rect x="160" y="452" width="1" height="3"/><rect x="170" y="84" width="1" height="3"/><rect x="170" y="452" width="1" height="3"/><rect x="180" y="84" width="1" height="5"/><rect x="180" y="450" width="1" height="5"/><rect x="190" y="84" width="1" height="3"/><rect x="190" y="452" width="1" height="3"/><rect x="200" y="84" width="1" height="3"/><rect x="200" y="452" width="1" height="3"/><rect x="210" y="84" width="1" height="3"/><rect x="210" y="452" width="1" height="3"/><rect x="220" y="84" width="1" height="3"/><rect x="220" y="452" width="1" height="3"/><rect x="230" y="84" width="1" height="5"/><rect x="230" y="450" width="1" height="5"/><rect x="240" y="84" width="1" height="3"/><rect x="240" y="452" width="1" height="3"/><rect x="250" y="84" width="1" height="3"/><rect x="250" y="452" width="1" height="3"/><rect x="260" y="84" width="1" height="3"/><rect x="260" y="452" width="1" height="3"/><rect x="270" y="84" width="1" height="3"/><rect x="270" y="452" width="1" height="3"/><rect x="280" y="84" width="1" height="5"/><rect x="280" y="450" width="1" height="5"/><rect x="290" y="84" width="1" height="3"/><rect x="290" y="452" width="1" height="3"/><rect x="300" y="84" width="1" height="3"/><rect x="300" y="452" width="1" height="3"/><rect x="310" y="84" width="1" height="3"/><rect x="310" y="452" width="1" height="3"/><rect x="320" y="84" width="1" height="3"/><rect x="320" y="452" width="1" height="3"/><rect x="330" y="84" width="1" height="5"/><rect x="330" y="450" width="1" height="5"/><rect x="340" y="84" width="1" height="3"/><rect x="340" y="452" width="1" height="3"/><rect x="350" y="84" width="1" height="3"/><rect x="350" y="452" width="1" height="3"/><rect x="360" y="84" width="1" height="3"/><rect x="360" y="452" width="1" height="3"/><rect x="370" y="84" width="1" height="3"/><rect x="370" y="452" width="1" height="3"/><rect x="380" y="84" width="1" height="5"/><rect x="380" y="450" width="1" height="5"/><rect x="390" y="84" width="1" height="3"/><rect x="390" y="452" width="1" height="3"/><rect x="400" y="84" width="1" height="3"/><rect x="400" y="452" width="1" height="3"/><rect x="410" y="84" width="1" height="3"/><rect x="410" y="452" width="1" height="3"/><rect x="420" y="84" width="1" height="3"/><rect x="420" y="452" width="1" height="3"/><rect x="430" y="84" width="1" height="5"/><rect x="430" y="450" width="1" height="5"/><rect x="440" y="84" width="1" height="3"/><rect x="440" y="452" width="1" height="3"/><rect x="450" y="84" width="1" height="3"/><rect x="450" y="452" width="1" height="3"/><rect x="460" y="84" width="1" height="3"/><rect x="460" y="452" width="1" height="3"/><rect x="470" y="84" width="1" height="3"/><rect x="470" y="452" width="1" height="3"/><rect x="480" y="84" width="1" height="5"/><rect x="480" y="450" width="1" height="5"/><rect x="490" y="84" width="1" height="3"/><rect x="490" y="452" width="1" height="3"/><rect x="500" y="84" width="1" height="3"/><rect x="500" y="452" width="1" height="3"/><rect x="510" y="84" width="1" height="3"/><rect x="510" y="452" width="1" height="3"/><rect x="520" y="84" width="1" height="3"/><rect x="520" y="452" width="1" height="3"/><rect x="30" y="91" width="3" height="1"/><rect x="527" y="91" width="3" height="1"/><rect x="30" y="98" width="3" height="1"/><rect x="527" y="98" width="3" height="1"/><rect x="30" y="105" width="3" height="1"/><rect x="527" y="105" width="3" height="1"/><rect x="30" y="112" width="3" height="1"/><rect x="527" y="112" width="3" height="1"/><rect x="30" y="121" width="5" height="1"/><rect x="525" y="121" width="5" height="1"/><rect x="30" y="128" width="3" height="1"/><rect x="527" y="128" width="3" height="1"/><rect x="30" y="135" width="3" height="1"/><rect x="527" y="135" width="3" height="1"/><rect x="30" y="142" width="3" height="1"/><rect x="527" y="142" width="3" height="1"/><rect x="30" y="149" width="3" height="1"/><rect x="527" y="149" width="3" height="1"/><rect x="30" y="158" width="5" height="1"/><rect x="525" y="158" width="5" height="1"/><rect x="30" y="165" width="3" height="1"/><rect x="527" y="165" width="3" height="1"/><rect x="30" y="172" width="3" height="1"/><rect x="527" y="172" width="3" height="1"/><rect x="30" y="179" width="3" height="1"/><rect x="527" y="179" width="3" height="1"/><rect x="30" y="186" width="3" height="1"/><rect x="527" y="186" width="3" height="1"/><rect x="30" y="195" width="5" height="1"/><rect x="525" y="195" width="5" height="1"/><rect x="30" y="202" width="3" height="1"/><rect x="527" y="202" width="3" height="1"/><rect x="30" y="209" width="3" height="1"/><rect x="527" y="209" width="3" height="1"/><rect x="30" y="216" width="3" height="1"/><rect x="527" y="216" width="3" height="1"/><rect x="30" y="223" width="3" height="1"/><rect x="527" y="223" width="3" height="1"/><rect x="30" y="232" width="5" height="1"/><rect x="525" y="232" width="5" height="1"/><rect x="30" y="239" width="3" height="1"/><rect x="527" y="239" width="3" height="1"/><rect x="30" y="246" width="3" height="1"/><rect x="527" y="246" width="3" height="1"/><rect x="30" y="253" width="3" height="1"/><rect x="527" y="253" width="3" height="1"/><rect x="30" y="260" width="3" height="1"/><rect x="527" y="260" width="3" height="1"/><rect x="30" y="269" width="5" height="1"/><rect x="525" y="269" width="5" height="1"/><rect x="30" y="276" width="3" height="1"/><rect x="527" y="276" width="3" height="1"/><rect x="30" y="283" width="3" height="1"/><rect x="527" y="283" width="3" height="1"/><rect x="30" y="290" width="3" height="1"/><rect x="527" y="290" width="3" height="1"/><rect x="30" y="297" width="3" height="1"/><rect x="527" y="297" width="3" height="1"/><rect x="30" y="306" width="5" height="1"/><rect x="525" y="306" width="5" height="1"/><rect x="30" y="313" width="3" height="1"/><rect x="527" y="313" width="3" height="1"/><rect x="30" y="320" width="3" height="1"/><rect x="527" y="320" width="3" height="1"/><rect x="30" y="327" width="3" height="1"/><rect x="527" y="327" width="3" height="1"/><rect x="30" y="334" width="3" height="1"/><rect x="527" y="334" width="3" height="1"/><rect x="30" y="343" width="5" height="1"/><rect x="525" y="343" width="5" height="1"/><rect x="30" y="350" width="3" height="1"/><rect x="527" y="350" width="3" height="1"/><rect x="30" y="357" width="3" height="1"/><rect x="527" y="357" width="3" height="1"/><rect x="30" y="364" width="3" height="1"/><rect x="527" y="364" width="3" height="1"/><rect x="30" y="371" width="3" height="1"/><rect x="527" y="371" width="3" height="1"/><rect x="30" y="380" width="5" height="1"/><rect x="525" y="380" width="5" height="1"/><rect x="30" y="387" width="3" height="1"/><rect x="527" y="387" width="3" height="1"/><rect x="30" y="394" width="3" height="1"/><rect x="527" y="394" width="3" height="1"/><rect x="30" y="401" width="3" height="1"/><rect x="527" y="401" width="3" height="1"/><rect x="30" y="408" width="3" height="1"/><rect x="527" y="408" width="3" height="1"/><rect x="30" y="417" width="5" height="1"/><rect x="525" y="417" width="5" height="1"/><rect x="30" y="424" width="3" height="1"/><rect x="527" y="424" width="3" height="1"/><rect x="30" y="431" width="3" height="1"/><rect x="527" y="431" width="3" height="1"/><rect x="30" y="438" width="3" height="1"/><rect x="527" y="438" width="3" height="1"/><rect x="30" y="445" width="3" height="1"/><rect x="527" y="445" width="3" height="1"/><rect x="80" y="92" width="1" height="1"/><rect x="80" y="99" width="1" height="1"/><rect x="80" y="106" width="1" height="1"/><rect x="80" y="113" width="1" height="1"/><rect x="80" y="121" width="1" height="1"/><rect x="80" y="129" width="1" height="1"/><rect x="80" y="136" width="1" height="1"/><rect x="80" y="143" width="1" height="1"/><rect x="80" y="150" width="1" height="1"/><rect x="80" y="158" width="1" height="1"/><rect x="80" y="166" width="1" height="1"/><rect x="80" y="173" width="1" height="1"/><rect x="80" y="180" width="1" height="1"/><rect x="80" y="187" width="1" height="1"/><rect x="80" y="195" width="1" height="1"/><rect x="80" y="203" width="1" height="1"/><rect x="80" y="210" width="1" height="1"/><rect x="80" y="217" width="1" height="1"/><rect x="80" y="224" width="1" height="1"/><rect x="80" y="232" width="1" height="1"/><rect x="80" y="240" width="1" height="1"/><rect x="80" y="247" width="1" height="1"/><rect x="80" y="254" width="1" height="1"/><rect x="80" y="261" width="1" height="1"/><rect x="80" y="269" width="1" height="1"/><rect x="80" y="277" width="1" height="1"/><rect x="80" y="284" width="1" height="1"/><rect x="80" y="291" width="1" height="1"/><rect x="80" y="298" width="1" height="1"/><rect x="80" y="306" width="1" height="1"/><rect x="80" y="314" width="1" height="1"/><rect x="80" y="321" width="1" height="1"/><rect x="80" y="328" width="1" height="1"/><rect x="80" y="335" width="1" height="1"/><rect x="80" y="343" width="1" height="1"/><rect x="80" y="351" width="1" height="1"/><rect x="80" y="358" width="1" height="1"/><rect x="80" y="365" width="1" height="1"/><rect x="80" y="372" width="1" height="1"/><rect x="80" y="380" width="1" height="1"/><rect x="80" y="388" width="1" height="1"/><rect x="80" y="395" width="1" height="1"/><rect x="80" y="402" width="1" height="1"/><rect x="80" y="409" width="1" height="1"/><rect x="80" y="417" width="1" height="1"/><rect x="80" y="425" width="1" height="1"/><rect x="80" y="432" width="1" height="1"/><rect x="80" y="439" width="1" height="1"/><rect x="80" y="446" width="1" height="1"/><rect x="130" y="92" width="1" height="1"/><rect x="130" y="99" width="1" height="1"/><rect x="130" y="106" width="1" height="1"/><rect x="130" y="113" width="1" height="1"/><rect x="130" y="121" width="1" height="1"/><rect x="130" y="129" width="1" height="1"/><rect x="130" y="136" width="1" height="1"/><rect x="130" y="143" width="1" height="1"/><rect x="130" y="150" width="1" height="1"/><rect x="130" y="158" width="1" height="1"/><rect x="130" y="166" width="1" height="1"/><rect x="130" y="173" width="1" height="1"/><rect x="130" y="180" width="1" height="1"/><rect x="130" y="187" width="1" height="1"/><rect x="130" y="195" width="1" height="1"/><rect x="130" y="203" width="1" height="1"/><rect x="130" y="210" width="1" height="1"/><rect x="130" y="217" width="1" height="1"/><rect x="130" y="224" width="1" height="1"/><rect x="130" y="232" width="1" height="1"/><rect x="130" y="240" width="1" height="1"/><rect x="130" y="247" width="1" height="1"/><rect x="130" y="254" width="1" height="1"/><rect x="130" y="261" width="1" height="1"/><rect x="130" y="269" width="1" height="1"/><rect x="130" y="277" width="1" height="1"/><rect x="130" y="284" width="1" height="1"/><rect x="130" y="291" width="1" height="1"/><rect x="130" y="298" width="1" height="1"/><rect x="130" y="306" width="1" height="1"/><rect x="130" y="314" width="1" height="1"/><rect x="130" y="321" width="1" height="1"/><rect x="130" y="328" width="1" height="1"/><rect x="130" y="335" width="1" height="1"/><rect x="130" y="343" width="1" height="1"/><rect x="130" y="351" width="1" height="1"/><rect x="130" y="358" width="1" height="1"/><rect x="130" y="365" width="1" height="1"/><rect x="130" y="372" width="1" height="1"/><rect x="130" y="380" width="1" height="1"/><rect x="130" y="388" width="1" height="1"/><rect x="130" y="395" width="1" height="1"/><rect x="130" y="402" width="1" height="1"/><rect x="130" y="409" width="1" height="1"/><rect x="130" y="417" width="1" height="1"/><rect x="130" y="425" width="1" height="1"/><rect x="130" y="432" width="1" height="1"/><rect x="130" y="439" width="1" height="1"/><rect x="130" y="446" width="1" height="1"/><rect x="180" y="92" width="1" height="1"/><rect x="180" y="99" width="1" height="1"/><rect x="180" y="106" width="1" height="1"/><rect x="180" y="113" width="1" height="1"/><rect x="180" y="121" width="1" height="1"/><rect x="180" y="129" width="1" height="1"/><rect x="180" y="136" width="1" height="1"/><rect x="180" y="143" width="1" height="1"/><rect x="180" y="150" width="1" height="1"/><rect x="180" y="158" width="1" height="1"/><rect x="180" y="166" width="1" height="1"/><rect x="180" y="173" width="1" height="1"/><rect x="180" y="180" width="1" height="1"/><rect x="180" y="187" width="1" height="1"/><rect x="180" y="195" width="1" height="1"/><rect x="180" y="203" width="1" height="1"/><rect x="180" y="210" width="1" height="1"/><rect x="180" y="217" width="1" height="1"/><rect x="180" y="224" width="1" height="1"/><rect x="180" y="232" width="1" height="1"/><rect x="180" y="240" width="1" height="1"/><rect x="180" y="247" width="1" height="1"/><rect x="180" y="254" width="1" height="1"/><rect x="180" y="261" width="1" height="1"/><rect x="180" y="269" width="1" height="1"/><rect x="180" y="277" width="1" height="1"/><rect x="180" y="284" width="1" height="1"/><rect x="180" y="291" width="1" height="1"/><rect x="180" y="298" width="1" height="1"/><rect x="180" y="306" width="1" height="1"/><rect x="180" y="314" width="1" height="1"/><rect x="180" y="321" width="1" height="1"/><rect x="180" y="328" width="1" height="1"/><rect x="180" y="335" width="1" height="1"/><rect x="180" y="343" width="1" height="1"/><rect x="180" y="351" width="1" height="1"/><rect x="180" y="358" width="1" height="1"/><rect x="180" y="365" width="1" height="1"/><rect x="180" y="372" width="1" height="1"/><rect x="180" y="380" width="1" height="1"/><rect x="180" y="388" width="1" height="1"/><rect x="180" y="395" width="1" height="1"/><rect x="180" y="402" width="1" height="1"/><rect x="180" y="409" width="1" height="1"/><rect x="180" y="417" width="1" height="1"/><rect x="180" y="425" width="1" height="1"/><rect x="180" y="432" width="1" height="1"/><rect x="180" y="439" width="1" height="1"/><rect x="180" y="446" width="1" height="1"/><rect x="230" y="92" width="1" height="1"/><rect x="230" y="99" width="1" height="1"/><rect x="230" y="106" width="1" height="1"/><rect x="230" y="113" width="1" height="1"/><rect x="230" y="121" width="1" height="1"/><rect x="230" y="129" width="1" height="1"/><rect x="230" y="136" width="1" height="1"/><rect x="230" y="143" width="1" height="1"/><rect x="230" y="150" width="1" height="1"/><rect x="230" y="158" width="1" height="1"/><rect x="230" y="166" width="1" height="1"/><rect x="230" y="173" width="1" height="1"/><rect x="230" y="180" width="1" height="1"/><rect x="230" y="187" width="1" height="1"/><rect x="230" y="195" width="1" height="1"/><rect x="230" y="203" width="1" height="1"/><rect x="230" y="210" width="1" height="1"/><rect x="230" y="217" width="1" height="1"/><rect x="230" y="224" width="1" height="1"/><rect x="230" y="232" width="1" height="1"/><rect x="230" y="240" width="1" height="1"/><rect x="230" y="247" width="1" height="1"/><rect x="230" y="254" width="1" height="1"/><rect x="230" y="261" width="1" height="1"/><rect x="230" y="269" width="1" height="1"/><rect x="230" y="277" width="1" height="1"/><rect x="230" y="284" width="1" height="1"/><rect x="230" y="291" width="1" height="1"/><rect x="230" y="298" width="1" height="1"/><rect x="230" y="306" width="1" height="1"/><rect x="230" y="314" width="1" height="1"/><rect x="230" y="321" width="1" height="1"/><rect x="230" y="328" width="1" height="1"/><rect x="230" y="335" width="1" height="1"/><rect x="230" y="343" width="1" height="1"/><rect x="230" y="351" width="1" height="1"/><rect x="230" y="358" width="1" height="1"/><rect x="230" y="365" width="1" height="1"/><rect x="230" y="372" width="1" height="1"/><rect x="230" y="380" width="1" height="1"/><rect x="230" y="388" width="1" height="1"/><rect x="230" y="395" width="1" height="1"/><rect x="230" y="402" width="1" height="1"/><rect x="230" y="409" width="1" height="1"/><rect x="230" y="417" width="1" height="1"/><rect x="230" y="425" width="1" height="1"/><rect x="230" y="432" width="1" height="1"/><rect x="230" y="439" width="1" height="1"/><rect x="230" y="446" width="1" height="1"/><rect x="330" y="92" width="1" height="1"/><rect x="330" y="99" width="1" height="1"/><rect x="330" y="106" width="1" height="1"/><rect x="330" y="113" width="1" height="1"/><rect x="330" y="121" width="1" height="1"/><rect x="330" y="129" width="1" height="1"/><rect x="330" y="136" width="1" height="1"/><rect x="330" y="143" width="1" height="1"/><rect x="330" y="150" width="1" height="1"/><rect x="330" y="158" width="1" height="1"/><rect x="330" y="166" width="1" height="1"/><rect x="330" y="173" width="1" height="1"/><rect x="330" y="180" width="1" height="1"/><rect x="330" y="187" width="1" height="1"/><rect x="330" y="195" width="1" height="1"/><rect x="330" y="203" width="1" height="1"/><rect x="330" y="210" width="1" height="1"/><rect x="330" y="217" width="1" height="1"/><rect x="330" y="224" width="1" height="1"/><rect x="330" y="232" width="1" height="1"/><rect x="330" y="240" width="1" height="1"/><rect x="330" y="247" width="1" height="1"/><rect x="330" y="254" width="1" height="1"/><rect x="330" y="261" width="1" height="1"/><rect x="330" y="269" width="1" height="1"/><rect x="330" y="277" width="1" height="1"/><rect x="330" y="284" width="1" height="1"/><rect x="330" y="291" width="1" height="1"/><rect x="330" y="298" width="1" height="1"/><rect x="330" y="306" width="1" height="1"/><rect x="330" y="314" width="1" height="1"/><rect x="330" y="321" width="1" height="1"/><rect x="330" y="328" width="1" height="1"/><rect x="330" y="335" width="1" height="1"/><rect x="330" y="343" width="1" height="1"/><rect x="330" y="351" width="1" height="1"/><rect x="330" y="358" width="1" height="1"/><rect x="330" y="365" width="1" height="1"/><rect x="330" y="372" width="1" height="1"/><rect x="330" y="380" width="1" height="1"/><rect x="330" y="388" width="1" height="1"/><rect x="330" y="395" width="1" height="1"/><rect x="330" y="402" width="1" height="1"/><rect x="330" y="409" width="1" height="1"/><rect x="330" y="417" width="1" height="1"/><rect x="330" y="425" width="1" height="1"/><rect x="330" y="432" width="1" height="1"/><rect x="330" y="439" width="1" height="1"/><rect x="330" y="446" width="1" height="1"/><rect x="380" y="92" width="1" height="1"/><rect x="380" y="99" width="1" height="1"/><rect x="380" y="106" width="1" height="1"/><rect x="380" y="113" width="1" height="1"/><rect x="380" y="121" width="1" height="1"/><rect x="380" y="129" width="1" height="1"/><rect x="380" y="136" width="1" height="1"/><rect x="380" y="143" width="1" height="1"/><rect x="380" y="150" width="1" height="1"/><rect x="380" y="158" width="1" height="1"/><rect x="380" y="166" width="1" height="1"/><rect x="380" y="173" width="1" height="1"/><rect x="380" y="180" width="1" height="1"/><rect x="380" y="187" width="1" height="1"/><rect x="380" y="195" width="1" height="1"/><rect x="380" y="203" width="1" height="1"/><rect x="380" y="210" width="1" height="1"/><rect x="380" y="217" width="1" height="1"/><rect x="380" y="224" width="1" height="1"/><rect x="380" y="232" width="1" height="1"/><rect x="380" y="240" width="1" height="1"/><rect x="380" y="247" width="1" height="1"/><rect x="380" y="254" width="1" height="1"/><rect x="380" y="261" width="1" height="1"/><rect x="380" y="269" width="1" height="1"/><rect x="380" y="277" width="1" height="1"/><rect x="380" y="284" width="1" height="1"/><rect x="380" y="291" width="1" height="1"/><rect x="380" y="298" width="1" height="1"/><rect x="380" y="306" width="1" height="1"/><rect x="380" y="314" width="1" height="1"/><rect x="380" y="321" width="1" height="1"/><rect x="380" y="328" width="1" height="1"/><rect x="380" y="335" width="1" height="1"/><rect x="380" y="343" width="1" height="1"/><rect x="380" y="351" width="1" height="1"/><rect x="380" y="358" width="1" height="1"/><rect x="380" y="365" width="1" height="1"/><rect x="380" y="372" width="1" height="1"/><rect x="380" y="380" width="1" height="1"/><rect x="380" y="388" width="1" height="1"/><rect x="380" y="395" width="1" height="1"/><rect x="380" y="402" width="1" height="1"/><rect x="380" y="409" width="1" height="1"/><rect x="380" y="417" width="1" height="1"/><rect x="380" y="425" width="1" height="1"/><rect x="380" y="432" width="1" height="1"/><rect x="380" y="439" width="1" height="1"/><rect x="380" y="446" width="1" height="1"/><rect x="430" y="92" width="1" height="1"/><rect x="430" y="99" width="1" height="1"/><rect x="430" y="106" width="1" height="1"/><rect x="430" y="113" width="1" height="1"/><rect x="430" y="121" width="1" height="1"/><rect x="430" y="129" width="1" height="1"/><rect x="430" y="136" width="1" height="1"/><rect x="430" y="143" width="1" height="1"/><rect x="430" y="150" width="1" height="1"/><rect x="430" y="158" width="1" height="1"/><rect x="430" y="166" width="1" height="1"/><rect x="430" y="173" width="1" height="1"/><rect x="430" y="180" width="1" height="1"/><rect x="430" y="187" width="1" height="1"/><rect x="430" y="195" width="1" height="1"/><rect x="430" y="203" width="1" height="1"/><rect x="430" y="210" width="1" height="1"/><rect x="430" y="217" width="1" height="1"/><rect x="430" y="224" width="1" height="1"/><rect x="430" y="232" width="1" height="1"/><rect x="430" y="240" width="1" height="1"/><rect x="430" y="247" width="1" height="1"/><rect x="430" y="254" width="1" height="1"/><rect x="430" y="261" width="1" height="1"/><rect x="430" y="269" width="1" height="1"/><rect x="430" y="277" width="1" height="1"/><rect x="430" y="284" width="1" height="1"/><rect x="430" y="291" width="1" height="1"/><rect x="430" y="298" width="1" height="1"/><rect x="430" y="306" width="1" height="1"/><rect x="430" y="314" width="1" height="1"/><rect x="430" y="321" width="1" height="1"/><rect x="430" y="328" width="1" height="1"/><rect x="430" y="335" width="1" height="1"/><rect x="430" y="343" width="1" height="1"/><rect x="430" y="351" width="1" height="1"/><rect x="430" y="358" width="1" height="1"/><rect x="430" y="365" width="1" height="1"/><rect x="430" y="372" width="1" height="1"/><rect x="430" y="380" width="1" height="1"/><rect x="430" y="388" width="1" height="1"/><rect x="430" y="395" width="1" height="1"/><rect x="430" y="402" width="1" height="1"/><rect x="430" y="409" width="1" height="1"/><rect x="430" y="417" width="1" height="1"/><rect x="430" y="425" width="1" height="1"/><rect x="430" y="432" width="1" height="1"/><rect x="430" y="439" width="1" height="1"/><rect x="430" y="446" width="1" height="1"/><rect x="480" y="92" width="1" height="1"/><rect x="480" y="99" width="1" height="1"/><rect x="480" y="106" width="1" height="1"/><rect x="480" y="113" width="1" height="1"/><rect x="480" y="121" width="1" height="1"/><rect x="480" y="129" width="1" height="1"/><rect x="480" y="136" width="1" height="1"/><rect x="480" y="143" width="1" height="1"/><rect x="480" y="150" width="1" height="1"/><rect x="480" y="158" width="1" height="1"/><rect x="480" y="166" width="1" height="1"/><rect x="480" y="173" width="1" height="1"/><rect x="480" y="180" width="1" height="1"/><rect x="480" y="187" width="1" height="1"/><rect x="480" y="195" width="1" height="1"/><rect x="480" y="203" width="1" height="1"/><rect x="480" y="210" width="1" height="1"/><rect x="480" y="217" width="1" height="1"/><rect x="480" y="224" width="1" height="1"/><rect x="480" y="232" width="1" height="1"/><rect x="480" y="240" width="1" height="1"/><rect x="480" y="247" width="1" height="1"/><rect x="480" y="254" width="1" height="1"/><rect x="480" y="261" width="1" height="1"/><rect x="480" y="269" width="1" height="1"/><rect x="480" y="277" width="1" height="1"/><rect x="480" y="284" width="1" height="1"/><rect x="480" y="291" width="1" height="1"/><rect x="480" y="298" width="1" height="1"/><rect x="480" y="306" width="1" height="1"/><rect x="480" y="314" width="1" height="1"/><rect x="480" y="321" width="1" height="1"/><rect x="480" y="328" width="1" height="1"/><rect x="480" y="335" width="1" height="1"/><rect x="480" y="343" width="1" height="1"/><rect x="480" y="351" width="1" height="1"/><rect x="480" y="358" width="1" height="1"/><rect x="480" y="365" width="1" height="1"/><rect x="480" y="372" width="1" height="1"/><rect x="480" y="380" width="1" height="1"/><rect x="480" y="388" width="1" height="1"/><rect x="480" y="395" width="1" height="1"/><rect x="480" y="402" width="1" height="1"/><rect x="480" y="409" width="1" height="1"/><rect x="480" y="417" width="1" height="1"/><rect x="480" y="425" width="1" height="1"/><rect x="480" y="432" width="1" height="1"/><rect x="480" y="439" width="1" height="1"/><rect x="480" y="446" width="1" height="1"/><rect x="40" y="121" width="1" height="1"/><rect x="50" y="121" width="1" height="1"/><rect x="60" y="121" width="1" height="1"/><rect x="70" y="121" width="1" height="1"/><rect x="80" y="121" width="1" height="1"/><rect x="90" y="121" width="1" height="1"/><rect x="100" y="121" width="1" height="1"/><rect x="110" y="121" width="1" height="1"/><rect x="120" y="121" width="1" height="1"/><rect x="130" y="121" width="1" height="1"/><rect x="140" y="121" width="1" height="1"/><rect x="150" y="121" width="1" height="1"/><rect x="160" y="121" width="1" height="1"/><rect x="170" y="121" width="1" height="1"/><rect x="180" y="121" width="1" height="1"/><rect x="190" y="121" width="1" height="1"/><rect x="200" y="121" width="1" height="1"/><rect x="210" y="121" width="1" height="1"/><rect x="220" y="121" width="1" height="1"/><rect x="230" y="121" width="1" height="1"/><rect x="240" y="121" width="1" height="1"/><rect x="250" y="121" width="1" height="1"/><rect x="260" y="121" width="1" height="1"/><rect x="270" y="121" width="1" height="1"/><rect x="280" y="121" width="1" height="1"/><rect x="290" y="121" width="1" height="1"/><rect x="300" y="121" width="1" height="1"/><rect x="310" y="121" width="1" height="1"/><rect x="320" y="121" width="1" height="1"/><rect x="330" y="121" width="1" height="1"/><rect x="340" y="121" width="1" height="1"/><rect x="350" y="121" width="1" height="1"/><rect x="360" y="121" width="1" height="1"/><rect x="370" y="121" width="1" height="1"/><rect x="380" y="121" width="1" height="1"/><rect x="390" y="121" width="1" height="1"/><rect x="400" y="121" width="1" height="1"/><rect x="410" y="121" width="1" height="1"/><rect x="420" y="121" width="1" height="1"/><rect x="430" y="121" width="1" height="1"/><rect x="440" y="121" width="1" height="1"/><rect x="450" y="121" width="1" height="1"/><rect x="460" y="121" width="1" height="1"/><rect x="470" y="121" width="1" height="1"/><rect x="480" y="121" width="1" height="1"/><rect x="490" y="121" width="1" height="1"/><rect x="500" y="121" width="1" height="1"/><rect x="510" y="121" width="1" height="1"/><rect x="520" y="121" width="1" height="1"/><rect x="40" y="158" width="1" height="1"/><rect x="50" y="158" width="1" height="1"/><rect x="60" y="158" width="1" height="1"/><rect x="70" y="158" width="1" height="1"/><rect x="80" y="158" width="1" height="1"/><rect x="90" y="158" width="1" height="1"/><rect x="100" y="158" width="1" height="1"/><rect x="110" y="158" width="1" height="1"/><rect x="120" y="158" width="1" height="1"/><rect x="130" y="158" width="1" height="1"/><rect x="140" y="158" width="1" height="1"/><rect x="150" y="158" width="1" height="1"/><rect x="160" y="158" width="1" height="1"/><rect x="170" y="158" width="1" height="1"/><rect x="180" y="158" width="1" height="1"/><rect x="190" y="158" width="1" height="1"/><rect x="200" y="158" width="1" height="1"/><rect x="210" y="158" width="1" height="1"/><rect x="220" y="158" width="1" height="1"/><rect x="230" y="158" width="1" height="1"/><rect x="240" y="158" width="1" height="1"/><rect x="250" y="158" width="1" height="1"/><rect x="260" y="158" width="1" height="1"/><rect x="270" y="158" width="1" height="1"/><rect x="280" y="158" width="1" height="1"/><rect x="290" y="158" width="1" height="1"/><rect x="300" y="158" width="1" height="1"/><rect x="310" y="158" width="1" height="1"/><rect x="320" y="158" width="1" height="1"/><rect x="330" y="158" width="1" height="1"/><rect x="340" y="158" width="1" height="1"/><rect x="350" y="158" width="1" height="1"/><rect x="360" y="158" width="1" height="1"/><rect x="370" y="158" width="1" height="1"/><rect x="380" y="158" width="1" height="1"/><rect x="390" y="158" width="1" height="1"/><rect x="400" y="158" width="1" height="1"/><rect x="410" y="158" width="1" height="1"/><rect x="420" y="158" width="1" height="1"/><rect x="430" y="158" width="1" height="1"/><rect x="440" y="158" width="1" height="1"/><rect x="450" y="158" width="1" height="1"/><rect x="460" y="158" width="1" height="1"/><rect x="470" y="158" width="1" height="1"/><rect x="480" y="158" width="1" height="1"/><rect x="490" y="158" width="1" height="1"/><rect x="500" y="158" width="1" height="1"/><rect x="510" y="158" width="1" height="1"/><rect x="520" y="158" width="1" height="1"/><rect x="40" y="195" width="1" height="1"/><rect x="50" y="195" width="1" height="1"/><rect x="60" y="195" width="1" height="1"/><rect x="70" y="195" width="1" height="1"/><rect x="80" y="195" width="1" height="1"/><rect x="90" y="195" width="1" height="1"/><rect x="100" y="195" width="1" height="1"/><rect x="110" y="195" width="1" height="1"/><rect x="120" y="195" width="1" height="1"/><rect x="130" y="195" width="1" height="1"/><rect x="140" y="195" width="1" height="1"/><rect x="150" y="195" width="1" height="1"/><rect x="160" y="195" width="1" height="1"/><rect x="170" y="195" width="1" height="1"/><rect x="180" y="195" width="1" height="1"/><rect x="190" y="195" width="1" height="1"/><rect x="200" y="195" width="1" height="1"/><rect x="210" y="195" width="1" height="1"/><rect x="220" y="195" width="1" height="1"/><rect x="230" y="195" width="1" height="1"/><rect x="240" y="195" width="1" height="1"/><rect x="250" y="195" width="1" height="1"/><rect x="260" y="195" width="1" height="1"/><rect x="270" y="195" width="1" height="1"/><rect x="280" y="195" width="1" height="1"/><rect x="290" y="195" width="1" height="1"/><rect x="300" y="195" width="1" height="1"/><rect x="310" y="195" width="1" height="1"/><rect x="320" y="195" width="1" height="1"/><rect x="330" y="195" width="1" height="1"/><rect x="340" y="195" width="1" height="1"/><rect x="350" y="195" width="1" height="1"/><rect x="360" y="195" width="1" height="1"/><rect x="370" y="195" width="1" height="1"/><rect x="380" y="195" width="1" height="1"/><rect x="390" y="195" width="1" height="1"/><rect x="400" y="195" width="1" height="1"/><rect x="410" y="195" width="1" height="1"/><rect x="420" y="195" width="1" height="1"/><rect x="430" y="195" width="1" height="1"/><rect x="440" y="195" width="1" height="1"/><rect x="450" y="195" width="1" height="1"/><rect x="460" y="195" width="1" height="1"/><rect x="470" y="195" width="1" height="1"/><rect x="480" y="195" width="1" height="1"/><rect x="490" y="195" width="1" height="1"/><rect x="500" y="195" width="1" height="1"/><rect x="510" y="195" width="1" height="1"/><rect x="520" y="195" width="1" height="1"/><rect x="40" y="232" width="1" height="1"/><rect x="50" y="232" width="1" height="1"/><rect x="60" y="232" width="1" height="1"/><rect x="70" y="232" width="1" height="1"/><rect x="80" y="232" width="1" height="1"/><rect x="90" y="232" width="1" height="1"/><rect x="100" y="232" width="1" height="1"/><rect x="110" y="232" width="1" height="1"/><rect x="120" y="232" width="1" height="1"/><rect x="130" y="232" width="1" height="1"/><rect x="140" y="232" width="1" height="1"/><rect x="150" y="232" width="1" height="1"/><rect x="160" y="232" width="1" height="1"/><rect x="170" y="232" width="1" height="1"/><rect x="180" y="232" width="1" height="1"/><rect x="190" y="232" width="1" height="1"/><rect x="200" y="232" width="1" height="1"/><rect x="210" y="232" width="1" height="1"/><rect x="220" y="232" width="1" height="1"/><rect x="230" y="232" width="1" height="1"/><rect x="240" y="232" width="1" height="1"/><rect x="250" y="232" width="1" height="1"/><rect x="260" y="232" width="1" height="1"/><rect x="270" y="232" width="1" height="1"/><rect x="280" y="232" width="1" height="1"/><rect x="290" y="232" width="1" height="1"/><rect x="300" y="232" width="1" height="1"/><rect x="310" y="232" width="1" height="1"/><rect x="320" y="232" width="1" height="1"/><rect x="330" y="232" width="1" height="1"/><rect x="340" y="232" width="1" height="1"/><rect x="350" y="232" width="1" height="1"/><rect x="360" y="232" width="1" height="1"/><rect x="370" y="232" width="1" height="1"/><rect x="380" y="232" width="1" height="1"/><rect x="390" y="232" width="1" height="1"/><rect x="400" y="232" width="1" height="1"/><rect x="410" y="232" width="1" height="1"/><rect x="420" y="232" width="1" height="1"/><rect x="430" y="232" width="1" height="1"/><rect x="440" y="232" width="1" height="1"/><rect x="450" y="232" width="1" height="1"/><rect x="460" y="232" width="1" height="1"/><rect x="470" y="232" width="1" height="1"/><rect x="480" y="232" width="1" height="1"/><rect x="490" y="232" width="1" height="1"/><rect x="500" y="232" width="1" height="1"/><rect x="510" y="232" width="1" height="1"/><rect x="520" y="232" width="1" height="1"/><rect x="40" y="306" width="1" height="1"/><rect x="50" y="306" width="1" height="1"/><rect x="60" y="306" width="1" height="1"/><rect x="70" y="306" width="1" height="1"/><rect x="80" y="306" width="1" height="1"/><rect x="90" y="306" width="1" height="1"/><rect x="100" y="306" width="1" height="1"/><rect x="110" y="306" width="1" height="1"/><rect x="120" y="306" width="1" height="1"/><rect x="130" y="306" width="1" height="1"/><rect x="140" y="306" width="1" height="1"/><rect x="150" y="306" width="1" height="1"/><rect x="160" y="306" width="1" height="1"/><rect x="170" y="306" width="1" height="1"/><rect x="180" y="306" width="1" height="1"/><rect x="190" y="306" width="1" height="1"/><rect x="200" y="306" width="1" height="1"/><rect x="210" y="306" width="1" height="1"/><rect x="220" y="306" width="1" height="1"/><rect x="230" y="306" width="1" height="1"/><rect x="240" y="306" width="1" height="1"/><rect x="250" y="306" width="1" height="1"/><rect x="260" y="306" width="1" height="1"/><rect x="270" y="306" width="1" height="1"/><rect x="280" y="306" width="1" height="1"/><rect x="290" y="306" width="1" height="1"/><rect x="300" y="306" width="1" height="1"/><rect x="310" y="306" width="1" height="1"/><rect x="320" y="306" width="1" height="1"/><rect x="330" y="306" width="1" height="1"/><rect x="340" y="306" width="1" height="1"/><rect x="350" y="306" width="1" height="1"/><rect x="360" y="306" width="1" height="1"/><rect x="370" y="306" width="1" height="1"/><rect x="380" y="306" width="1" height="1"/><rect x="390" y="306" width="1" height="1"/><rect x="400" y="306" width="1" height="1"/><rect x="410" y="306" width="1" height="1"/><rect x="420" y="306" width="1" height="1"/><rect x="430" y="306" width="1" height="1"/><rect x="440" y="306" width="1" height="1"/><rect x="450" y="306" width="1" height="1"/><rect x="460" y="306" width="1" height="1"/><rect x="470" y="306" width="1" height="1"/><rect x="480" y="306" width="1" height="1"/><rect x="490" y="306" width="1" height="1"/><rect x="500" y="306" width="1" height="1"/><rect x="510" y="306" width="1" height="1"/><rect x="520" y="306" width="1" height="1"/><rect x="40" y="343" width="1" height="1"/><rect x="50" y="343" width="1" height="1"/><rect x="60" y="343" width="1" height="1"/><rect x="70" y="343" width="1" height="1"/><rect x="80" y="343" width="1" height="1"/><rect x="90" y="343" width="1" height="1"/><rect x="100" y="343" width="1" height="1"/><rect x="110" y="343" width="1" height="1"/><rect x="120" y="343" width="1" height="1"/><rect x="130" y="343" width="1" height="1"/><rect x="140" y="343" width="1" height="1"/><rect x="150" y="343" width="1" height="1"/><rect x="160" y="343" width="1" height="1"/><rect x="170" y="343" width="1" height="1"/><rect x="180" y="343" width="1" height="1"/><rect x="190" y="343" width="1" height="1"/><rect x="200" y="343" width="1" height="1"/><rect x="210" y="343" width="1" height="1"/><rect x="220" y="343" width="1" height="1"/><rect x="230" y="343" width="1" height="1"/><rect x="240" y="343" width="1" height="1"/><rect x="250" y="343" width="1" height="1"/><rect x="260" y="343" width="1" height="1"/><rect x="270" y="343" width="1" height="1"/><rect x="280" y="343" width="1" height="1"/><rect x="290" y="343" width="1" height="1"/><rect x="300" y="343" width="1" height="1"/><rect x="310" y="343" width="1" height="1"/><rect x="320" y="343" width="1" height="1"/><rect x="330" y="343" width="1" height="1"/><rect x="340" y="343" width="1" height="1"/><rect x="350" y="343" width="1" height="1"/><rect x="360" y="343" width="1" height="1"/><rect x="370" y="343" width="1" height="1"/><rect x="380" y="343" width="1" height="1"/><rect x="390" y="343" width="1" height="1"/><rect x="400" y="343" width="1" height="1"/><rect x="410" y="343" width="1" height="1"/><rect x="420" y="343" width="1" height="1"/><rect x="430" y="343" width="1" height="1"/><rect x="440" y="343" width="1" height="1"/><rect x="450" y="343" width="1" height="1"/><rect x="460" y="343" width="1" height="1"/><rect x="470" y="343" width="1" height="1"/><rect x="480" y="343" width="1" height="1"/><rect x="490" y="343" width="1" height="1"/><rect x="500" y="343" width="1" height="1"/><rect x="510" y="343" width="1" height="1"/><rect x="520" y="343" width="1" height="1"/><rect x="40" y="380" width="1" height="1"/><rect x="50" y="380" width="1" height="1"/><rect x="60" y="380" width="1" height="1"/><rect x="70" y="380" width="1" height="1"/><rect x="80" y="380" width="1" height="1"/><rect x="90" y="380" width="1" height="1"/><rect x="100" y="380" width="1" height="1"/><rect x="110" y="380" width="1" height="1"/><rect x="120" y="380" width="1" height="1"/><rect x="130" y="380" width="1" height="1"/><rect x="140" y="380" width="1" height="1"/><rect x="150" y="380" width="1" height="1"/><rect x="160" y="380" width="1" height="1"/><rect x="170" y="380" width="1" height="1"/><rect x="180" y="380" width="1" height="1"/><rect x="190" y="380" width="1" height="1"/><rect x="200" y="380" width="1" height="1"/><rect x="210" y="380" width="1" height="1"/><rect x="220" y="380" width="1" height="1"/><rect x="230" y="380" width="1" height="1"/><rect x="240" y="380" width="1" height="1"/><rect x="250" y="380" width="1" height="1"/><rect x="260" y="380" width="1" height="1"/><rect x="270" y="380" width="1" height="1"/><rect x="280" y="380" width="1" height="1"/><rect x="290" y="380" width="1" height="1"/><rect x="300" y="380" width="1" height="1"/><rect x="310" y="380" width="1" height="1"/><rect x="320" y="380" width="1" height="1"/><rect x="330" y="380" width="1" height="1"/><rect x="340" y="380" width="1" height="1"/><rect x="350" y="380" width="1" height="1"/><rect x="360" y="380" width="1" height="1"/><rect x="370" y="380" width="1" height="1"/><rect x="380" y="380" width="1" height="1"/><rect x="390" y="380" width="1" height="1"/><rect x="400" y="380" width="1" height="1"/><rect x="410" y="380" width="1" height="1"/><rect x="420" y="380" width="1" height="1"/><rect x="430" y="380" width="1" height="1"/><rect x="440" y="380" width="1" height="1"/><rect x="450" y="380" width="1" height="1"/><rect x="460" y="380" width="1" height="1"/><rect x="470" y="380" width="1" height="1"/><rect x="480" y="380" width="1" height="1"/><rect x="490" y="380" width="1" height="1"/><rect x="500" y="380" width="1" height="1"/><rect x="510" y="380" width="1" height="1"/><rect x="520" y="380" width="1" height="1"/><rect x="40" y="417" width="1" height="1"/><rect x="50" y="417" width="1" height="1"/><rect x="60" y="417" width="1" height="1"/><rect x="70" y="417" width="1" height="1"/><rect x="80" y="417" width="1" height="1"/><rect x="90" y="417" width="1" height="1"/><rect x="100" y="417" width="1" height="1"/><rect x="110" y="417" width="1" height="1"/><rect x="120" y="417" width="1" height="1"/><rect x="130" y="417" width="1" height="1"/><rect x="140" y="417" width="1" height="1"/><rect x="150" y="417" width="1" height="1"/><rect x="160" y="417" width="1" height="1"/><rect x="170" y="417" width="1" height="1"/><rect x="180" y="417" width="1" height="1"/><rect x="190" y="417" width="1" height="1"/><rect x="200" y="417" width="1" height="1"/><rect x="210" y="417" width="1" height="1"/><rect x="220" y="417" width="1" height="1"/><rect x="230" y="417" width="1" height="1"/><rect x="240" y="417" width="1" height="1"/><rect x="250" y="417" width="1" height="1"/><rect x="260" y="417" width="1" height="1"/><rect x="270" y="417" width="1" height="1"/><rect x="280" y="417" width="1" height="1"/><rect x="290" y="417" width="1" height="1"/><rect x="300" y="417" width="1" height="1"/><rect x="310" y="417" width="1" height="1"/><rect x="320" y="417" width="1" height="1"/><rect x="330" y="417" width="1" height="1"/><rect x="340" y="417" width="1" height="1"/><rect x="350" y="417" width="1" height="1"/><rect x="360" y="417" width="1" height="1"/><rect x="370" y="417" width="1" height="1"/><rect x="380" y="417" width="1" height="1"/><rect x="390" y="417" width="1" height="1"/><rect x="400" y="417" width="1" height="1"/><rect x="410" y="417" width="1" height="1"/><rect x="420" y="417" width="1" height="1"/><rect x="430" y="417" width="1" height="1"/><rect x="440" y="417" width="1" height="1"/><rect x="450" y="417" width="1" height="1"/><rect x="460" y="417" width="1" height="1"/><rect x="470" y="417" width="1" height="1"/><rect x="480" y="417" width="1" height="1"/><rect x="490" y="417" width="1" height="1"/><rect x="500" y="417" width="1" height="1"/><rect x="510" y="417" width="1" height="1"/><rect x="520" y="417" width="1" height="1"/><rect x="30" y="269" width="500" height="1"/><rect x="280" y="84" width="1" height="371"/><rect x="40" y="268" width="1" height="3"/><rect x="279" y="92" width="3" height="1"/><rect x="50" y="268" width="1" height="3"/><rect x="279" y="99" width="3" height="1"/><rect x="60" y="268" width="1" height="3"/><rect x="279" y="106" width="3" height="1"/><rect x="70" y="268" width="1" height="3"/><rect x="279" y="113" width="3" height="1"/><rect x="80" y="268" width="1" height="3"/><rect x="279" y="121" width="3" height="1"/><rect x="90" y="268" width="1" height="3"/><rect x="279" y="129" width="3" height="1"/><rect x="100" y="268" width="1" height="3"/><rect x="279" y="136" width="3" height="1"/><rect x="110" y="268" width="1" height="3"/><rect x="279" y="143" width="3" height="1"/><rect x="120" y="268" width="1" height="3"/><rect x="279" y="150" width="3" height="1"/><rect x="130" y="268" width="1" height="3"/><rect x="279" y="158" width="3" height="1"/><rect x="140" y="268" width="1" height="3"/><rect x="279" y="166" width="3" height="1"/><rect x="150" y="268" width="1" height="3"/><rect x="279" y="173" width="3" height="1"/><rect x="160" y="268" width="1" height="3"/><rect x="279" y="180" width="3" height="1"/><rect x="170" y="268" width="1" height="3"/><rect x="279" y="187" width="3" height="1"/><rect x="180" y="268" width="1" height="3"/><rect x="279" y="195" width="3" height="1"/><rect x="190" y="268" width="1" height="3"/><rect x="279" y="203" width="3" height="1"/><rect x="200" y="268" width="1" height="3"/><rect x="279" y="210" width="3" height="1"/><rect x="210" y="268" width="1" height="3"/><rect x="279" y="217" width="3" height="1"/><rect x="220" y="268" width="1" height="3"/><rect x="279" y="224" width="3" height="1"/><rect x="230" y="268" width="1" height="3"/><rect x="279" y="232" width="3" height="1"/><rect x="240" y="268" width="1" height="3"/><rect x="279" y="240" width="3" height="1"/><rect x="250" y="268" width="1" height="3"/><rect x="279" y="247" width="3" height="1"/><rect x="260" y="268" width="1" height="3"/><rect x="279" y="254" width="3" height="1"/><rect x="270" y="268" width="1" height="3"/><rect x="279" y="261" width="3" height="1"/><rect x="280" y="268" width="1" height="3"/><rect x="279" y="269" width="3" height="1"/><rect x="290" y="268" width="1" height="3"/><rect x="279" y="277" width="3" height="1"/><rect x="300" y="268" width="1" height="3"/><rect x="279" y="284" width="3" height="1"/><rect x="310" y="268" width="1" height="3"/><rect x="279" y="291" width="3" height="1"/><rect x="320" y="268" width="1" height="3"/><rect x="279" y="298" width="3" height="1"/><rect x="330" y="268" width="1" height="3"/><rect x="279" y="306" width="3" height="1"/><rect x="340" y="268" width="1" height="3"/><rect x="279" y="314" width="3" height="1"/><rect x="350" y="268" width="1" height="3"/><rect x="279" y="321" width="3" height="1"/><rect x="360" y="268" width="1" height="3"/><rect x="279" y="328" width="3" height="1"/><rect x="370" y="268" width="1" height="3"/><rect x="279" y="335" width="3" height="1"/><rect x="380" y="268" width="1" height="3"/><rect x="279" y="343" width="3" height="1"/><rect x="390" y="268" width="1" height="3"/><rect x="279" y="351" width="3" height="1"/><rect x="400" y="268" width="1" height="3"/><rect x="279" y="358" width="3" height="1"/><rect x="410" y="268" width="1" height="3"/><rect x="279" y="365" width="3" height="1"/><rect x="420" y="268" width="1" height="3"/><rect x="279" y="372" width="3" height="1"/><rect x="430" y="268" width="1" height="3"/><rect x="279" y="380" width="3" height="1"/><rect x="440" y="268" width="1" height="3"/><rect x="279" y="388" width="3" height="1"/><rect x="450" y="268" width="1" height="3"/><rect x="279" y="395" width="3" height="1"/><rect x="460" y="268" width="1" height="3"/><rect x="279" y="402" width="3" height="1"/><rect x="470" y="268" width="1" height="3"/><rect x="279" y="409" width="3" height="1"/><rect x="480" y="268" width="1" height="3"/><rect x="279" y="417" width="3" height="1"/><rect x="490" y="268" width="1" height="3"/><rect x="279" y="425" width="3" height="1"/><rect x="500" y="268" width="1" height="3"/><rect x="279" y="432" width="3" height="1"/><rect x="510" y="268" width="1" height="3"/><rect x="279" y="439" width="3" height="1"/><rect x="520" y="268" width="1" height="3"/><rect x="279" y="446" width="3" height="1"/></g>
<path d="M47.5 84H63.5L55.5 100Z" fill="#800000"/>
<g fill="#ffff00" shape-rendering="crispEdges"><rect x="30" y="233" width="1" height="2"/><rect x="31" y="233" width="1" height="2"/><rect x="32" y="233" width="1" height="2"/><rect x="33" y="233" width="1" height="3"/><rect x="34" y="233" width="1" height="2"/><rect x="35" y="233" width="1" height="3"/><rect x="36" y="232" width="1" height="3"/><rect x="37" y="232" width="1" height="3"/><rect x="38" y="233" width="1" height="2"/><rect x="39" y="233" width="1" height="2"/><rect x="40" y="233" width="1" height="2"/><rect x="41" y="233" width="1" height="2"/><rect x="42" y="233" width="1" height="2"/><rect x="43" y="233" width="1" height="2"/><rect x="44" y="233" width="1" height="2"/><rect x="45" y="233" width="1" height="2"/><rect x="46" y="233" width="1" height="2"/><rect x="47" y="233" width="1" height="3"/><rect x="48" y="233" width="1" height="2"/><rect x="49" y="233" width="1" height="2"/><rect x="50" y="233" width="1" height="2"/><rect x="51" y="233" width="1" height="2"/><rect x="52" y="233" width="1" height="2"/><rect x="53" y="233" width="1" height="2"/><rect x="54" y="233" width="1" height="2"/><rect x="55" y="233" width="1" height="2"/><rect x="56" y="233" width="1" height="2"/><rect x="57" y="233" width="1" height="2"/><rect x="58" y="232" width="1" height="3"/><rect x="59" y="233" width="1" height="2"/><rect x="60" y="233" width="1" height="2"/><rect x="61" y="233" width="1" height="2"/><rect x="62" y="233" width="1" height="2"/><rect x="63" y="233" width="1" height="2"/><rect x="64" y="233" width="1" height="2"/><rect x="65" y="233" width="1" height="2"/><rect x="66" y="233" width="1" height="2"/><rect x="67" y="233" width="1" height="2"/><rect x="68" y="233" width="1" height="2"/><rect x="69" y="233" width="1" height="2"/><rect x="70" y="233" width="1" height="2"/><rect x="71" y="233" width="1" height="2"/><rect x="72" y="233" width="1" height="2"/><rect x="73" y="233" width="1" height="2"/><rect x="74" y="233" width="1" height="2"/><rect x="75" y="233" width="1" height="2"/><rect x="76" y="233" width="1" height="2"/><rect x="77" y="233" width="1" height="2"/><rect x="78" y="233" width="1" height="2"/><rect x="79" y="233" width="1" height="2"/><rect x="80" y="233" width="1" height="3"/><rect x="81" y="233" width="1" height="2"/><rect x="82" y="233" width="1" height="2"/><rect x="83" y="233" width="1" height="2"/><rect x="84" y="233" width="1" height="2"/><rect x="85" y="233" width="1" height="2"/><rect x="86" y="233" width="1" height="2"/><rect x="87" y="233" width="1" height="2"/><rect x="88" y="233" width="1" height="2"/><rect x="89" y="233" width="1" height="2"/><rect x="90" y="233" width="1" height="2"/><rect x="91" y="233" width="1" height="2"/><rect x="92" y="233" width="1" height="2"/><rect x="93" y="233" width="1" height="3"/><rect x="94" y="233" width="1" height="2"/><rect x="95" y="233" width="1" height="2"/><rect x="96" y="233" width="1" height="2"/><rect x="97" y="233" width="1" height="2"/><rect x="98" y="233" width="1" height="2"/><rect x="99" y="233" width="1" height="2"/><rect x="100" y="232" width="1" height="3"/><rect x="101" y="233" width="1" height="2"/><rect x="102" y="233" width="1" height="2"/><rect x="103" y="233" width="1" height="3"/><rect x="104" y="233" width="1" height="2"/><rect x="105" y="233" width="1" height="2"/><rect x="106" y="233" width="1" height="2"/><rect x="107" y="233" width="1" height="2"/><rect x="108" y="232" width="1" height="3"/><rect x="109" y="233" width="1" height="2"/><rect x="110" y="233" width="1" height="2"/><rect x="111" y="233" width="1" height="2"/><rect x="112" y="233" width="1" height="2"/><rect x="113" y="233" width="1" height="2"/><rect x="114" y="233" width="1" height="2"/><rect x="115" y="233" width="1" height="2"/><rect x="116" y="233" width="1" height="2"/><rect x="117" y="233" width="1" height="2"/><rect x="118" y="233" width="1" height="2"/><rect x="119" y="233" width="1" height="2"/><rect x="120" y="233" width="1" height="2"/><rect x="121" y="233" width="1" height="2"/><rect x="122" y="233" width="1" height="2"/><rect x="123" y="233" width="1" height="2"/><rect x="124" y="233" width="1" height="2"/><rect x="125" y="232" width="1" height="3"/><rect x="126" y="233" width="1" height="2"/><rect x="127" y="233" width="1" height="2"/><rect x="128" y="233" width="1" height="2"/><rect x="129" y="233" width="1" height="3"/><rect x="130" y="234" width="1" height="3"/><rect x="142" y="317" width="1" height="3"/><rect x="143" y="318" width="1" height="3"/><rect x="144" y="319" width="1" height="4"/><rect x="145" y="320" width="1" height="2"/><rect x="146" y="319" width="1" height="3"/><rect x="147" y="319" width="1" height="2"/><rect x="148" y="319" width="1" height="2"/><rect x="149" y="319" width="1" height="2"/><rect x="150" y="318" width="1" height="3"/><rect x="151" y="318" width="1" height="2"/><rect x="152" y="317" width="1" height="3"/><rect x="153" y="317" width="1" height="3"/><rect x="154" y="317" width="1" height="2"/><rect x="155" y="317" width="1" height="2"/><rect x="156" y="315" width="1" height="4"/><rect x="157" y="316" width="1" height="2"/><rect x="158" y="316" width="1" height="2"/><rect x="159" y="316" width="1" height="2"/><rect x="160" y="315" width="1" height="4"/><rect x="161" y="315" width="1" height="2"/><rect x="162" y="315" width="1" height="2"/><rect x="163" y="315" width="1" height="2"/><rect x="164" y="316" width="1" height="2"/><rect x="165" y="316" width="1" height="2"/><rect x="166" y="316" width="1" height="2"/><rect x="167" y="316" width="1" height="2"/><rect x="168" y="317" width="1" height="2"/><rect x="169" y="317" width="1" height="2"/><rect x="170" y="317" width="1" height="2"/><rect x="171" y="317" width="1" height="3"/><rect x="172" y="318" width="1" height="2"/><rect x="173" y="318" width="1" height="3"/><rect x="174" y="319" width="1" height="2"/><rect x="175" y="319" width="1" height="3"/><rect x="176" y="320" width="1" height="3"/><rect x="177" y="320" width="1" height="2"/><rect x="178" y="320" width="1" height="2"/><rect x="179" y="319" width="1" height="3"/><rect x="180" y="319" width="1" height="3"/><rect x="181" y="319" width="1" height="2"/><rect x="182" y="319" width="1" height="2"/><rect x="183" y="319" width="1" height="2"/><rect x="184" y="318" width="1" height="3"/><rect x="185" y="318" width="1" height="2"/><rect x="186" y="318" width="1" height="2"/><rect x="187" y="317" width="1" height="2"/><rect x="188" y="317" width="1" height="2"/><rect x="189" y="317" width="1" height="2"/><rect x="190" y="317" width="1" height="2"/><rect x="191" y="317" width="1" height="2"/><rect x="192" y="317" width="1" height="2"/><rect x="193" y="317" width="1" height="2"/><rect x="194" y="317" width="1" height="3"/><rect x="195" y="318" width="1" height="2"/><rect x="196" y="318" width="1" height="2"/><rect x="197" y="318" width="1" height="2"/><rect x="198" y="318" width="1" height="2"/><rect x="199" y="318" width="1" height="2"/><rect x="200" y="318" width="1" height="2"/><rect x="201" y="318" width="1" height="3"/><rect x="202" y="319" width="1" height="2"/><rect x="203" y="319" width="1" height="2"/><rect x="204" y="319" width="1" height="2"/><rect x="205" y="319" width="1" height="2"/><rect x="206" y="319" width="1" height="2"/><rect x="207" y="319" width="1" height="2"/><rect x="208" y="319" width="1" height="2"/><rect x="209" y="319" width="1" height="2"/><rect x="210" y="319" width="1" height="2"/><rect x="211" y="319" width="1" height="2"/><rect x="212" y="319" width="1" height="2"/><rect x="213" y="319" width="1" height="2"/><rect x="214" y="319" width="1" height="2"/><rect x="215" y="319" width="1" height="2"/><rect x="216" y="319" width="1" height="2"/><rect x="217" y="319" width="1" height="2"/><rect x="218" y="319" width="1" height="2"/><rect x="219" y="319" width="1" height="2"/><rect x="220" y="319" width="1" height="2"/><rect x="221" y="319" width="1" height="3"/><rect x="222" y="319" width="1" height="2"/><rect x="223" y="319" width="1" height="2"/><rect x="224" y="319" width="1" height="2"/><rect x="225" y="319" width="1" height="2"/><rect x="226" y="319" width="1" height="2"/><rect x="227" y="319" width="1" height="2"/><rect x="228" y="319" width="1" height="2"/><rect x="229" y="319" width="1" height="2"/><rect x="230" y="319" width="1" height="2"/><rect x="231" y="319" width="1" height="2"/><rect x="232" y="319" width="1" height="2"/><rect x="233" y="319" width="1" height="2"/><rect x="234" y="319" width="1" height="2"/><rect x="235" y="319" width="1" height="2"/><rect x="236" y="319" width="1" height="2"/><rect x="237" y="319" width="1" height="2"/><rect x="238" y="319" width="1" height="2"/><rect x="239" y="319" width="1" height="2"/><rect x="240" y="319" width="1" height="2"/><rect x="241" y="319" width="1" height="2"/><rect x="242" y="319" width="1" height="2"/><rect x="243" y="319" width="1" height="2"/><rect x="244" y="319" width="1" height="2"/><rect x="245" y="319" width="1" height="2"/><rect x="246" y="319" width="1" height="2"/><rect x="247" y="319" width="1" height="3"/><rect x="248" y="319" width="1" height="2"/><rect x="249" y="319" width="1" height="2"/><rect x="250" y="319" width="1" height="2"/><rect x="251" y="319" width="1" height="2"/><rect x="252" y="319" width="1" height="2"/><rect x="253" y="319" width="1" height="2"/><rect x="254" y="319" width="1" height="2"/><rect x="255" y="319" width="1" height="2"/><rect x="256" y="319" width="1" height="2"/><rect x="257" y="319" width="1" height="2"/><rect x="258" y="319" width="1" height="2"/><rect x="259" y="319" width="1" height="2"/><rect x="260" y="319" width="1" height="2"/><rect x="261" y="319" width="1" height="2"/><rect x="262" y="319" width="1" height="2"/><rect x="263" y="319" width="1" height="2"/><rect x="264" y="319" width="1" height="2"/><rect x="265" y="319" width="1" height="2"/><rect x="266" y="319" width="1" height="2"/><rect x="267" y="319" width="1" height="2"/><rect x="268" y="319" width="1" height="2"/><rect x="269" y="319" width="1" height="2"/><rect x="270" y="319" width="1" height="2"/><rect x="271" y="319" width="1" height="2"/><rect x="272" y="318" width="1" height="3"/><rect x="273" y="319" width="1" height="2"/><rect x="274" y="319" width="1" height="3"/><rect x="275" y="319" width="1" height="2"/><rect x="276" y="319" width="1" height="2"/><rect x="277" y="319" width="1" height="2"/><rect x="278" y="319" width="1" height="2"/><rect x="279" y="319" width="1" height="2"/><rect x="280" y="319" width="1" height="2"/><rect x="281" y="319" width="1" height="2"/><rect x="282" y="319" width="1" height="2"/><rect x="283" y="319" width="1" height="2"/><rect x="284" y="319" width="1" height="2"/><rect x="285" y="319" width="1" height="2"/><rect x="286" y="319" width="1" height="2"/><rect x="287" y="319" width="1" height="2"/><rect x="288" y="319" width="1" height="2"/><rect x="289" y="319" width="1" height="2"/><rect x="290" y="319" width="1" height="2"/><rect x="291" y="319" width="1" height="2"/><rect x="292" y="319" width="1" height="2"/><rect x="293" y="319" width="1" height="2"/><rect x="294" y="319" width="1" height="2"/><rect x="295" y="319" width="1" height="2"/><rect x="296" y="319" width="1" height="2"/><rect x="297" y="319" width="1" height="2"/><rect x="298" y="319" width="1" height="2"/><rect x="299" y="319" width="1" height="2"/><rect x="300" y="319" width="1" height="2"/><rect x="301" y="319" width="1" height="2"/><rect x="302" y="319" width="1" height="2"/><rect x="303" y="319" width="1" height="2"/><rect x="304" y="319" width="1" height="2"/><rect x="305" y="319" width="1" height="2"/><rect x="306" y="319" width="1" height="2"/><rect x="307" y="319" width="1" height="2"/><rect x="308" y="319" width="1" height="2"/><rect x="309" y="319" width="1" height="2"/><rect x="310" y="319" width="1" height="2"/><rect x="311" y="318" width="1" height="3"/><rect x="312" y="319" width="1" height="3"/><rect x="313" y="319" width="1" height="2"/><rect x="314" y="319" width="1" height="2"/><rect x="315" y="319" width="1" height="2"/><rect x="316" y="319" width="1" height="2"/><rect x="317" y="319" width="1" height="2"/><rect x="318" y="319" width="1" height="2"/><rect x="319" y="319" width="1" height="2"/><rect x="320" y="319" width="1" height="2"/><rect x="321" y="319" width="1" height="2"/><rect x="322" y="319" width="1" height="2"/><rect x="323" y="319" width="1" height="2"/><rect x="324" y="319" width="1" height="2"/><rect x="325" y="319" width="1" height="2"/><rect x="326" y="319" width="1" height="2"/><rect x="327" y="319" width="1" height="2"/><rect x="328" y="318" width="1" height="3"/><rect x="329" y="317" width="1" height="3"/><rect x="330" y="316" width="1" height="3"/><rect x="344" y="238" width="1" height="3"/><rect x="345" y="237" width="1" height="3"/><rect x="346" y="236" width="1" height="3"/><rect x="347" y="236" width="1" height="3"/><rect x="348" y="236" width="1" height="2"/><rect x="349" y="234" width="1" height="3"/><rect x="350" y="235" width="1" height="2"/><rect x="351" y="235" width="1" height="2"/><rect x="352" y="235" width="1" height="3"/><rect x="353" y="235" width="1" height="2"/><rect x="354" y="235" width="1" height="2"/><rect x="355" y="235" width="1" height="2"/><rect x="356" y="235" width="1" height="2"/><rect x="357" y="235" width="1" height="3"/><rect x="358" y="235" width="1" height="2"/><rect x="359" y="235" width="1" height="2"/><rect x="360" y="235" width="1" height="2"/><rect x="361" y="235" width="1" height="2"/><rect x="362" y="235" width="1" height="2"/><rect x="363" y="234" width="1" height="3"/><rect x="364" y="234" width="1" height="2"/><rect x="365" y="234" width="1" height="2"/><rect x="366" y="234" width="1" height="2"/><rect x="367" y="234" width="1" height="2"/><rect x="368" y="233" width="1" height="3"/><rect x="369" y="234" width="1" height="2"/><rect x="370" y="234" width="1" height="2"/><rect x="371" y="234" width="1" height="3"/><rect x="372" y="234" width="1" height="2"/><rect x="373" y="234" width="1" height="2"/><rect x="374" y="234" width="1" height="3"/><rect x="375" y="234" width="1" height="3"/><rect x="376" y="234" width="1" height="2"/><rect x="377" y="234" width="1" height="2"/><rect x="378" y="234" width="1" height="2"/><rect x="379" y="234" width="1" height="2"/><rect x="380" y="234" width="1" height="2"/><rect x="381" y="234" width="1" height="2"/><rect x="382" y="234" width="1" height="2"/><rect x="383" y="234" width="1" height="2"/><rect x="384" y="234" width="1" height="2"/><rect x="385" y="234" width="1" height="2"/><rect x="386" y="233" width="1" height="3"/><rect x="387" y="234" width="1" height="2"/><rect x="388" y="234" width="1" height="2"/><rect x="389" y="234" width="1" height="2"/><rect x="390" y="234" width="1" height="2"/><rect x="391" y="234" width="1" height="2"/><rect x="392" y="234" width="1" height="2"/><rect x="393" y="234" width="1" height="2"/><rect x="394" y="233" width="1" height="3"/><rect x="395" y="234" width="1" height="3"/><rect x="396" y="234" width="1" height="2"/><rect x="397" y="234" width="1" height="2"/><rect x="398" y="234" width="1" height="2"/><rect x="399" y="234" width="1" height="2"/><rect x="400" y="234" width="1" height="2"/><rect x="401" y="234" width="1" height="2"/><rect x="402" y="234" width="1" height="2"/><rect x="403" y="234" width="1" height="2"/><rect x="404" y="234" width="1" height="2"/><rect x="405" y="234" width="1" height="2"/><rect x="406" y="234" width="1" height="2"/><rect x="407" y="234" width="1" height="2"/><rect x="408" y="234" width="1" height="2"/><rect x="409" y="234" width="1" height="2"/><rect x="410" y="234" width="1" height="2"/><rect x="411" y="234" width="1" height="2"/><rect x="412" y="234" width="1" height="2"/><rect x="413" y="234" width="1" height="2"/><rect x="414" y="234" width="1" height="2"/><rect x="415" y="233" width="1" height="3"/><rect x="416" y="234" width="1" height="3"/><rect x="417" y="234" width="1" height="2"/><rect x="418" y="234" width="1" height="2"/><rect x="419" y="234" width="1" height="3"/><rect x="420" y="233" width="1" height="3"/><rect x="421" y="233" width="1" height="2"/><rect x="422" y="233" width="1" height="2"/><rect x="423" y="233" width="1" height="2"/><rect x="424" y="233" width="1" height="2"/><rect x="425" y="233" width="1" height="2"/><rect x="426" y="233" width="1" height="2"/><rect x="427" y="233" width="1" height="2"/><rect x="428" y="233" width="1" height="2"/><rect x="429" y="233" width="1" height="2"/><rect x="430" y="233" width="1" height="2"/><rect x="431" y="233" width="1" height="2"/><rect x="432" y="233" width="1" height="2"/><rect x="433" y="233" width="1" height="2"/><rect x="434" y="233" width="1" height="2"/><rect x="435" y="233" width="1" height="2"/><rect x="436" y="232" width="1" height="3"/><rect x="437" y="233" width="1" height="2"/><rect x="438" y="233" width="1" height="2"/><rect x="439" y="233" width="1" height="2"/><rect x="440" y="233" width="1" height="2"/><rect x="441" y="232" width="1" height="3"/><rect x="442" y="232" width="1" height="3"/><rect x="443" y="232" width="1" height="3"/><rect x="444" y="233" width="1" height="2"/><rect x="445" y="233" width="1" height="2"/><rect x="446" y="233" width="1" height="2"/><rect x="447" y="233" width="1" height="2"/><rect x="448" y="233" width="1" height="2"/><rect x="449" y="233" width="1" height="2"/><rect x="450" y="233" width="1" height="2"/><rect x="451" y="233" width="1" height="2"/><rect x="452" y="233" width="1" height="2"/><rect x="453" y="233" width="1" height="2"/><rect x="454" y="233" width="1" height="2"/><rect x="455" y="233" width="1" height="2"/><rect x="456" y="233" width="1" height="2"/><rect x="457" y="233" width="1" height="2"/><rect x="458" y="233" width="1" height="3"/><rect x="459" y="233" width="1" height="2"/><rect x="460" y="233" width="1" height="2"/><rect x="461" y="233" width="1" height="2"/><rect x="462" y="233" width="1" height="2"/><rect x="463" y="233" width="1" height="2"/><rect x="464" y="233" width="1" height="2"/><rect x="465" y="233" width="1" height="2"/><rect x="466" y="233" width="1" height="2"/><rect x="467" y="233" width="1" height="2"/><rect x="468" y="233" width="1" height="2"/><rect x="469" y="233" width="1" height="2"/><rect x="470" y="233" width="1" height="2"/><rect x="471" y="233" width="1" height="2"/><rect x="472" y="233" width="1" height="2"/><rect x="473" y="233" width="1" height="2"/><rect x="474" y="232" width="1" height="3"/><rect x="475" y="233" width="1" height="2"/><rect x="476" y="233" width="1" height="2"/><rect x="477" y="233" width="1" height="2"/><rect x="478" y="233" width="1" height="2"/><rect x="479" y="233" width="1" height="2"/><rect x="480" y="233" width="1" height="2"/><rect x="481" y="233" width="1" height="2"/><rect x="482" y="233" width="1" height="2"/><rect x="483" y="233" width="1" height="3"/><rect x="484" y="233" width="1" height="2"/><rect x="485" y="233" width="1" height="2"/><rect x="486" y="233" width="1" height="2"/><rect x="487" y="233" width="1" height="2"/><rect x="488" y="233" width="1" height="3"/><rect x="489" y="233" width="1" height="2"/><rect x="490" y="232" width="1" height="3"/><rect x="491" y="233" width="1" height="2"/><rect x="492" y="233" width="1" height="2"/><rect x="493" y="233" width="1" height="2"/><rect x="494" y="233" width="1" height="2"/><rect x="495" y="233" width="1" height="2"/><rect x="496" y="233" width="1" height="2"/><rect x="497" y="233" width="1" height="2"/><rect x="498" y="233" width="1" height="2"/><rect x="499" y="233" width="1" height="2"/><rect x="500" y="233" width="1" height="2"/><rect x="501" y="233" width="1" height="2"/><rect x="502" y="232" width="1" height="3"/><rect x="503" y="233" width="1" height="2"/><rect x="504" y="233" width="1" height="2"/><rect x="505" y="233" width="1" height="2"/><rect x="506" y="233" width="1" height="2"/><rect x="507" y="232" width="1" height="3"/><rect x="508" y="233" width="1" height="2"/><rect x="509" y="233" width="1" height="2"/><rect x="510" y="233" width="1" height="2"/><rect x="511" y="233" width="1" height="2"/><rect x="512" y="233" width="1" height="2"/><rect x="513" y="233" width="1" height="2"/><rect x="514" y="233" width="1" height="2"/><rect x="515" y="233" width="1" height="2"/><rect x="516" y="233" width="1" height="2"/><rect x="517" y="233" width="1" height="2"/><rect x="518" y="233" width="1" height="2"/><rect x="519" y="233" width="1" height="2"/><rect x="520" y="233" width="1" height="2"/><rect x="521" y="232" width="1" height="3"/><rect x="522" y="233" width="1" height="2"/><rect x="523" y="233" width="1" height="2"/><rect x="524" y="233" width="1" height="2"/><rect x="525" y="233" width="1" height="2"/><rect x="526" y="233" width="1" height="2"/><rect x="527" y="233" width="1" height="2"/><rect x="528" y="233" width="1" height="2"/><rect x="529" y="233" width="1" height="2"/><rect x="530" y="233" width="1" height="2"/><rect x="131" y="235" width="1" height="2"/><rect x="132" y="238" width="1" height="2"/><rect x="132" y="242" width="1" height="2"/><rect x="133" y="246" width="1" height="2"/><rect x="133" y="249" width="1" height="2"/><rect x="134" y="252" width="1" height="2"/><rect x="134" y="256" width="1" height="2"/><rect x="134" y="260" width="1" height="2"/><rect x="135" y="263" width="1" height="2"/><rect x="135" y="266" width="1" height="2"/><rect x="136" y="270" width="1" height="2"/><rect x="136" y="274" width="1" height="2"/><rect x="136" y="277" width="1" height="2"/><rect x="137" y="280" width="1" height="2"/><rect x="137" y="284" width="1" height="2"/><rect x="137" y="288" width="1" height="2"/><rect x="138" y="291" width="1" height="2"/><rect x="138" y="294" width="1" height="2"/><rect x="139" y="298" width="1" height="2"/><rect x="139" y="302" width="1" height="2"/><rect x="139" y="305" width="1" height="2"/><rect x="140" y="308" width="1" height="2"/><rect x="141" y="312" width="1" height="2"/><rect x="142" y="316" width="1" height="2"/><rect x="331" y="316" width="1" height="2"/><rect x="332" y="313" width="1" height="2"/><rect x="333" y="309" width="1" height="2"/><rect x="334" y="306" width="1" height="2"/><rect x="334" y="302" width="1" height="2"/><rect x="335" y="299" width="1" height="2"/><rect x="335" y="295" width="1" height="2"/><rect x="336" y="292" width="1" height="2"/><rect x="336" y="288" width="1" height="2"/><rect x="337" y="285" width="1" height="2"/><rect x="337" y="281" width="1" height="2"/><rect x="338" y="278" width="1" height="2"/><rect x="338" y="274" width="1" height="2"/><rect x="339" y="271" width="1" height="2"/><rect x="340" y="267" width="1" height="2"/><rect x="340" y="264" width="1" height="2"/><rect x="340" y="260" width="1" height="2"/><rect x="341" y="257" width="1" height="2"/><rect x="341" y="253" width="1" height="2"/><rect x="342" y="250" width="1" height="2"/><rect x="342" y="246" width="1" height="2"/><rect x="343" y="243" width="1" height="2"/><rect x="344" y="239" width="1" height="2"/></g>
<g fill="#00ff00" shape-rendering="crispEdges"><rect x="30" y="311" width="1" height="2"/><rect x="31" y="311" width="1" height="2"/><rect x="32" y="311" width="1" height="2"/><rect x="33" y="311" width="1" height="2"/><rect x="34" y="311" width="1" height="2"/><rect x="35" y="311" width="1" height="2"/><rect x="36" y="311" width="1" height="2"/><rect x="37" y="311" width="1" height="2"/><rect x="38" y="311" width="1" height="2"/><rect x="39" y="311" width="1" height="2"/><rect x="40" y="310" width="1" height="3"/><rect x="41" y="311" width="1" height="2"/><rect x="42" y="311" width="1" height="2"/><rect x="43" y="311" width="1" height="2"/><rect x="44" y="311" width="1" height="2"/><rect x="45" y="311" width="1" height="2"/><rect x="46" y="311" width="1" height="2"/><rect x="47" y="311" width="1" height="2"/><rect x="48" y="311" width="1" height="3"/><rect x="49" y="311" width="1" height="2"/><rect x="50" y="311" width="1" height="2"/><rect x="51" y="311" width="1" height="2"/><rect x="52" y="311" width="1" height="2"/><rect x="53" y="311" width="1" height="2"/><rect x="54" y="311" width="1" height="2"/><rect x="55" y="311" width="1" height="2"/><rect x="56" y="311" width="1" height="2"/><rect x="57" y="311" width="1" height="2"/><rect x="58" y="311" width="1" height="2"/><rect x="59" y="311" width="1" height="2"/><rect x="60" y="311" width="1" height="2"/><rect x="61" y="311" width="1" height="2"/><rect x="62" y="310" width="1" height="3"/><rect x="63" y="311" width="1" height="2"/><rect x="64" y="311" width="1" height="2"/><rect x="65" y="311" width="1" height="2"/><rect x="66" y="311" width="1" height="2"/><rect x="67" y="311" width="1" height="2"/><rect x="68" y="311" width="1" height="2"/><rect x="69" y="311" width="1" height="2"/><rect x="70" y="311" width="1" height="2"/><rect x="71" y="311" width="1" height="2"/><rect x="72" y="311" width="1" height="2"/><rect x="73" y="311" width="1" height="2"/><rect x="74" y="311" width="1" height="2"/><rect x="75" y="311" width="1" height="2"/><rect x="76" y="311" width="1" height="2"/><rect x="77" y="311" width="1" height="2"/><rect x="78" y="311" width="1" height="2"/><rect x="79" y="311" width="1" height="3"/><rect x="80" y="311" width="1" height="2"/><rect x="81" y="311" width="1" height="2"/><rect x="82" y="311" width="1" height="2"/><rect x="83" y="311" width="1" height="2"/><rect x="84" y="311" width="1" height="3"/><rect x="85" y="311" width="1" height="2"/><rect x="86" y="311" width="1" height="2"/><rect x="87" y="311" width="1" height="2"/><rect x="88" y="311" width="1" height="2"/><rect x="89" y="311" width="1" height="2"/><rect x="90" y="311" width="1" height="2"/><rect x="91" y="311" width="1" height="2"/><rect x="92" y="311" width="1" height="2"/><rect x="93" y="311" width="1" height="2"/><rect x="94" y="311" width="1" height="2"/><rect x="95" y="311" width="1" height="2"/><rect x="96" y="311" width="1" height="2"/><rect x="97" y="311" width="1" height="2"/><rect x="98" y="311" width="1" height="2"/><rect x="99" y="311" width="1" height="2"/><rect x="100" y="311" width="1" height="2"/><rect x="101" y="311" width="1" height="2"/><rect x="102" y="311" width="1" height="2"/><rect x="103" y="311" width="1" height="2"/><rect x="104" y="311" width="1" height="2"/><rect x="105" y="311" width="1" height="2"/><rect x="106" y="311" width="1" height="2"/><rect x="107" y="310" width="1" height="3"/><rect x="108" y="310" width="1" height="3"/><rect x="109" y="311" width="1" height="2"/><rect x="110" y="311" width="1" height="2"/><rect x="111" y="311" width="1" height="2"/><rect x="112" y="311" width="1" height="2"/><rect x="113" y="311" width="1" height="2"/><rect x="114" y="311" width="1" height="2"/><rect x="115" y="311" width="1" height="2"/><rect x="116" y="311" width="1" height="2"/><rect x="117" y="311" width="1" height="2"/><rect x="118" y="310" width="1" height="3"/><rect x="119" y="311" width="1" height="2"/><rect x="120" y="311" width="1" height="2"/><rect x="121" y="311" width="1" height="2"/><rect x="122" y="310" width="1" height="2"/><rect x="123" y="310" width="1" height="2"/><rect x="124" y="309" width="1" height="2"/><rect x="125" y="307" width="1" height="4"/><rect x="126" y="305" width="1" height="4"/><rect x="127" y="303" width="1" height="4"/><rect x="139" y="231" width="1" height="3"/><rect x="140" y="230" width="1" height="3"/><rect x="141" y="228" width="1" height="3"/><rect x="142" y="228" width="1" height="2"/><rect x="143" y="227" width="1" height="3"/><rect x="144" y="228" width="1" height="2"/><rect x="145" y="228" width="1" height="2"/><rect x="146" y="228" width="1" height="2"/><rect x="147" y="228" width="1" height="2"/><rect x="148" y="227" width="1" height="3"/><rect x="149" y="228" width="1" height="2"/><rect x="150" y="228" width="1" height="2"/><rect x="151" y="228" width="1" height="2"/><rect x="152" y="228" width="1" height="2"/><rect x="153" y="228" width="1" height="2"/><rect x="154" y="228" width="1" height="2"/><rect x="155" y="228" width="1" height="2"/><rect x="156" y="228" width="1" height="2"/><rect x="157" y="228" width="1" height="2"/><rect x="158" y="228" width="1" height="2"/><rect x="159" y="228" width="1" height="2"/><rect x="160" y="227" width="1" height="3"/><rect x="161" y="227" width="1" height="2"/><rect x="162" y="227" width="1" height="2"/><rect x="163" y="227" width="1" height="2"/><rect x="164" y="227" width="1" height="3"/><rect x="165" y="227" width="1" height="2"/><rect x="166" y="227" width="1" height="2"/><rect x="167" y="227" width="1" height="2"/><rect x="168" y="227" width="1" height="2"/><rect x="169" y="227" width="1" height="2"/><rect x="170" y="227" width="1" height="2"/><rect x="171" y="227" width="1" height="2"/><rect x="172" y="227" width="1" height="2"/><rect x="173" y="227" width="1" height="2"/><rect x="174" y="227" width="1" height="3"/><rect x="175" y="227" width="1" height="2"/><rect x="176" y="227" width="1" height="2"/><rect x="177" y="227" width="1" height="2"/><rect x="178" y="227" width="1" height="2"/><rect x="179" y="226" width="1" height="3"/><rect x="180" y="227" width="1" height="2"/><rect x="181" y="227" width="1" height="2"/><rect x="182" y="227" width="1" height="2"/><rect x="183" y="227" width="1" height="2"/><rect x="184" y="227" width="1" height="2"/><rect x="185" y="227" width="1" height="2"/><rect x="186" y="227" width="1" height="2"/><rect x="187" y="227" width="1" height="2"/><rect x="188" y="227" width="1" height="2"/><rect x="189" y="227" width="1" height="2"/><rect x="190" y="226" width="1" height="3"/><rect x="191" y="227" width="1" height="2"/><rect x="192" y="227" width="1" height="2"/><rect x="193" y="227" width="1" height="2"/><rect x="194" y="227" width="1" height="2"/><rect x="195" y="227" width="1" height="2"/><rect x="196" y="227" width="1" height="2"/><rect x="197" y="226" width="1" height="3"/><rect x="198" y="227" width="1" height="2"/><rect x="199" y="227" width="1" height="2"/><rect x="200" y="226" width="1" height="3"/><rect x="201" y="226" width="1" height="2"/><rect x="202" y="226" width="1" height="2"/><rect x="203" y="226" width="1" height="2"/><rect x="204" y="226" width="1" height="2"/><rect x="205" y="226" width="1" height="2"/><rect x="206" y="226" width="1" height="2"/><rect x="207" y="226" width="1" height="2"/><rect x="208" y="226" width="1" height="2"/><rect x="209" y="226" width="1" height="2"/><rect x="210" y="226" width="1" height="2"/><rect x="211" y="226" width="1" height="2"/><rect x="212" y="226" width="1" height="2"/><rect x="213" y="226" width="1" height="2"/><rect x="214" y="226" width="1" height="2"/><rect x="215" y="226" width="1" height="2"/><rect x="216" y="226" width="1" height="2"/><rect x="217" y="226" width="1" height="2"/><rect x="218" y="226" width="1" height="2"/><rect x="219" y="226" width="1" height="2"/><rect x="220" y="226" width="1" height="2"/><rect x="221" y="226" width="1" height="2"/><rect x="222" y="226" width="1" height="2"/><rect x="223" y="226" width="1" height="2"/><rect x="224" y="225" width="1" height="3"/><rect x="225" y="226" width="1" height="2"/><rect x="226" y="226" width="1" height="2"/><rect x="227" y="226" width="1" height="2"/><rect x="228" y="226" width="1" height="2"/><rect x="229" y="226" width="1" height="2"/><rect x="230" y="226" width="1" height="2"/><rect x="231" y="226" width="1" height="2"/><rect x="232" y="226" width="1" height="2"/><rect x="233" y="226" width="1" height="2"/><rect x="234" y="226" width="1" height="2"/><rect x="235" y="226" width="1" height="3"/><rect x="236" y="226" width="1" height="2"/><rect x="237" y="226" width="1" height="2"/><rect x="238" y="226" width="1" height="2"/><rect x="239" y="226" width="1" height="2"/><rect x="240" y="225" width="1" height="3"/><rect x="241" y="226" width="1" height="2"/><rect x="242" y="226" width="1" height="2"/><rect x="243" y="226" width="1" height="2"/><rect x="244" y="226" width="1" height="2"/><rect x="245" y="226" width="1" height="2"/><rect x="246" y="226" width="1" height="2"/><rect x="247" y="226" width="1" height="2"/><rect x="248" y="226" width="1" height="2"/><rect x="249" y="226" width="1" height="2"/><rect x="250" y="225" width="1" height="3"/><rect x="251" y="226" width="1" height="2"/><rect x="252" y="226" width="1" height="2"/><rect x="253" y="226" width="1" height="2"/><rect x="254" y="226" width="1" height="2"/><rect x="255" y="226" width="1" height="2"/><rect x="256" y="225" width="1" height="3"/><rect x="257" y="226" width="1" height="2"/><rect x="258" y="226" width="1" height="2"/><rect x="259" y="225" width="1" height="3"/><rect x="260" y="226" width="1" height="3"/><rect x="261" y="226" width="1" height="2"/><rect x="262" y="226" width="1" height="2"/><rect x="263" y="226" width="1" height="2"/><rect x="264" y="226" width="1" height="2"/><rect x="265" y="226" width="1" height="2"/><rect x="266" y="226" width="1" height="2"/><rect x="267" y="226" width="1" height="2"/><rect x="268" y="226" width="1" height="2"/><rect x="269" y="226" width="1" height="2"/><rect x="270" y="226" width="1" height="2"/><rect x="271" y="226" width="1" height="2"/><rect x="272" y="226" width="1" height="3"/><rect x="273" y="226" width="1" height="2"/><rect x="274" y="226" width="1" height="2"/><rect x="275" y="226" width="1" height="2"/><rect x="276" y="225" width="1" height="3"/><rect x="277" y="226" width="1" height="2"/><rect x="278" y="226" width="1" height="2"/><rect x="279" y="226" width="1" height="2"/><rect x="280" y="226" width="1" height="2"/><rect x="281" y="226" width="1" height="2"/><rect x="282" y="226" width="1" height="2"/><rect x="283" y="226" width="1" height="2"/><rect x="284" y="226" width="1" height="2"/><rect x="285" y="226" width="1" height="2"/><rect x="286" y="226" width="1" height="2"/><rect x="287" y="226" width="1" height="2"/><rect x="288" y="226" width="1" height="2"/><rect x="289" y="226" width="1" height="2"/><rect x="290" y="226" width="1" height="2"/><rect x="291" y="226" width="1" height="2"/><rect x="292" y="226" width="1" height="2"/><rect x="293" y="226" width="1" height="2"/><rect x="294" y="226" width="1" height="2"/><rect x="295" y="225" width="1" height="3"/><rect x="296" y="226" width="1" height="2"/><rect x="297" y="226" width="1" height="2"/><rect x="298" y="225" width="1" height="3"/><rect x="299" y="226" width="1" height="2"/><rect x="300" y="226" width="1" height="2"/><rect x="301" y="226" width="1" height="2"/><rect x="302" y="226" width="1" height="2"/><rect x="303" y="226" width="1" height="2"/><rect x="304" y="226" width="1" height="2"/><rect x="305" y="225" width="1" height="3"/><rect x="306" y="226" width="1" height="2"/><rect x="307" y="226" width="1" height="2"/><rect x="308" y="226" width="1" height="2"/><rect x="309" y="226" width="1" height="2"/><rect x="310" y="226" width="1" height="2"/><rect x="311" y="226" width="1" height="2"/><rect x="312" y="226" width="1" height="2"/><rect x="313" y="226" width="1" height="2"/><rect x="314" y="226" width="1" height="2"/><rect x="315" y="226" width="1" height="2"/><rect x="316" y="226" width="1" height="2"/><rect x="317" y="226" width="1" height="2"/><rect x="318" y="226" width="1" height="2"/><rect x="319" y="226" width="1" height="2"/><rect x="320" y="226" width="1" height="2"/><rect x="321" y="226" width="1" height="2"/><rect x="322" y="226" width="1" height="2"/><rect x="323" y="226" width="1" height="2"/><rect x="324" y="226" width="1" height="2"/><rect x="325" y="226" width="1" height="2"/><rect x="326" y="226" width="1" height="2"/><rect x="327" y="226" width="1" height="2"/><rect x="328" y="226" width="1" height="2"/><rect x="329" y="226" width="1" height="2"/><rect x="330" y="226" width="1" height="2"/><rect x="331" y="226" width="1" height="2"/><rect x="332" y="227" width="1" height="2"/><rect x="333" y="227" width="1" height="3"/><rect x="346" y="305" width="1" height="4"/><rect x="347" y="307" width="1" height="4"/><rect x="348" y="309" width="1" height="4"/><rect x="349" y="311" width="1" height="3"/><rect x="350" y="312" width="1" height="2"/><rect x="351" y="312" width="1" height="3"/><rect x="352" y="313" width="1" height="2"/><rect x="353" y="312" width="1" height="4"/><rect x="354" y="313" width="1" height="2"/><rect x="355" y="313" width="1" height="2"/><rect x="356" y="313" width="1" height="2"/><rect x="357" y="313" width="1" height="2"/><rect x="358" y="313" width="1" height="2"/><rect x="359" y="312" width="1" height="3"/><rect x="360" y="312" width="1" height="2"/><rect x="361" y="312" width="1" height="2"/><rect x="362" y="312" width="1" height="2"/><rect x="363" y="312" width="1" height="2"/><rect x="364" y="312" width="1" height="2"/><rect x="365" y="311" width="1" height="3"/><rect x="366" y="311" width="1" height="2"/><rect x="367" y="311" width="1" height="2"/><rect x="368" y="311" width="1" height="2"/><rect x="369" y="311" width="1" height="2"/><rect x="370" y="311" width="1" height="2"/><rect x="371" y="311" width="1" height="2"/><rect x="372" y="311" width="1" height="2"/><rect x="373" y="310" width="1" height="3"/><rect x="374" y="310" width="1" height="2"/><rect x="375" y="310" width="1" height="2"/><rect x="376" y="309" width="1" height="3"/><rect x="377" y="310" width="1" height="2"/><rect x="378" y="310" width="1" height="2"/><rect x="379" y="310" width="1" height="2"/><rect x="380" y="310" width="1" height="2"/><rect x="381" y="309" width="1" height="3"/><rect x="382" y="309" width="1" height="2"/><rect x="383" y="308" width="1" height="3"/><rect x="384" y="309" width="1" height="2"/><rect x="385" y="309" width="1" height="2"/><rect x="386" y="309" width="1" height="2"/><rect x="387" y="308" width="1" height="3"/><rect x="388" y="309" width="1" height="2"/><rect x="389" y="309" width="1" height="2"/><rect x="390" y="309" width="1" height="2"/><rect x="391" y="309" width="1" height="2"/><rect x="392" y="309" width="1" height="2"/><rect x="393" y="309" width="1" height="2"/><rect x="394" y="309" width="1" height="2"/><rect x="395" y="309" width="1" height="3"/><rect x="396" y="310" width="1" height="2"/><rect x="397" y="310" width="1" height="2"/><rect x="398" y="310" width="1" height="2"/><rect x="399" y="310" width="1" height="2"/><rect x="400" y="310" width="1" height="2"/><rect x="401" y="310" width="1" height="2"/><rect x="402" y="310" width="1" height="2"/><rect x="403" y="310" width="1" height="3"/><rect x="404" y="310" width="1" height="2"/><rect x="405" y="311" width="1" height="2"/><rect x="406" y="311" width="1" height="2"/><rect x="407" y="311" width="1" height="2"/><rect x="408" y="311" width="1" height="2"/><rect x="409" y="311" width="1" height="2"/><rect x="410" y="311" width="1" height="3"/><rect x="411" y="311" width="1" height="2"/><rect x="412" y="311" width="1" height="2"/><rect x="413" y="311" width="1" height="3"/><rect x="414" y="311" width="1" height="2"/><rect x="415" y="311" width="1" height="2"/><rect x="416" y="311" width="1" height="2"/><rect x="417" y="311" width="1" height="2"/><rect x="418" y="311" width="1" height="2"/><rect x="419" y="311" width="1" height="2"/><rect x="420" y="311" width="1" height="2"/><rect x="421" y="311" width="1" height="2"/><rect x="422" y="311" width="1" height="2"/><rect x="423" y="311" width="1" height="2"/><rect x="424" y="311" width="1" height="2"/><rect x="425" y="311" width="1" height="2"/><rect x="426" y="311" width="1" height="2"/><rect x="427" y="311" width="1" height="2"/><rect x="428" y="311" width="1" height="2"/><rect x="429" y="311" width="1" height="3"/><rect x="430" y="311" width="1" height="2"/><rect x="431" y="311" width="1" height="2"/><rect x="432" y="311" width="1" height="2"/><rect x="433" y="311" width="1" height="2"/><rect x="434" y="311" width="1" height="2"/><rect x="435" y="311" width="1" height="2"/><rect x="436" y="311" width="1" height="2"/><rect x="437" y="311" width="1" height="2"/><rect x="438" y="311" width="1" height="2"/><rect x="439" y="311" width="1" height="2"/><rect x="440" y="311" width="1" height="2"/><rect x="441" y="311" width="1" height="2"/><rect x="442" y="311" width="1" height="2"/><rect x="443" y="311" width="1" height="2"/><rect x="444" y="311" width="1" height="2"/><rect x="445" y="311" width="1" height="2"/><rect x="446" y="311" width="1" height="2"/><rect x="447" y="311" width="1" height="2"/><rect x="448" y="311" width="1" height="2"/><rect x="449" y="311" width="1" height="3"/><rect x="450" y="311" width="1" height="2"/><rect x="451" y="311" width="1" height="3"/><rect x="452" y="311" width="1" height="2"/><rect x="453" y="311" width="1" height="2"/><rect x="454" y="311" width="1" height="2"/><rect x="455" y="311" width="1" height="2"/><rect x="456" y="311" width="1" height="2"/><rect x="457" y="311" width="1" height="2"/><rect x="458" y="311" width="1" height="2"/><rect x="459" y="311" width="1" height="2"/><rect x="460" y="311" width="1" height="2"/><rect x="461" y="311" width="1" height="2"/><rect x="462" y="311" width="1" height="2"/><rect x="463" y="311" width="1" height="3"/><rect x="464" y="311" width="1" height="2"/><rect x="465" y="311" width="1" height="2"/><rect x="466" y="311" width="1" height="2"/><rect x="467" y="311" width="1" height="2"/><rect x="468" y="311" width="1" height="2"/><rect x="469" y="311" width="1" height="2"/><rect x="470" y="311" width="1" height="2"/><rect x="471" y="311" width="1" height="2"/><rect x="472" y="311" width="1" height="2"/><rect x="473" y="311" width="1" height="2"/><rect x="474" y="310" width="1" height="3"/><rect x="475" y="311" width="1" height="2"/><rect x="476" y="311" width="1" height="3"/><rect x="477" y="311" width="1" height="3"/><rect x="478" y="311" width="1" height="2"/><rect x="479" y="311" width="1" height="2"/><rect x="480" y="311" width="1" height="3"/><rect x="481" y="311" width="1" height="2"/><rect x="482" y="311" width="1" height="2"/><rect x="483" y="311" width="1" height="2"/><rect x="484" y="311" width="1" height="2"/><rect x="485" y="311" width="1" height="2"/><rect x="486" y="311" width="1" height="2"/><rect x="487" y="311" width="1" height="2"/><rect x="488" y="311" width="1" height="2"/><rect x="489" y="311" width="1" height="2"/><rect x="490" y="311" width="1" height="2"/><rect x="491" y="311" width="1" height="2"/><rect x="492" y="311" width="1" height="2"/><rect x="493" y="311" width="1" height="2"/><rect x="494" y="311" width="1" height="2"/><rect x="495" y="311" width="1" height="2"/><rect x="496" y="310" width="1" height="3"/><rect x="497" y="311" width="1" height="2"/><rect x="498" y="311" width="1" height="2"/><rect x="499" y="311" width="1" height="2"/><rect x="500" y="311" width="1" height="2"/><rect x="501" y="311" width="1" height="2"/><rect x="502" y="311" width="1" height="2"/><rect x="503" y="311" width="1" height="2"/><rect x="504" y="311" width="1" height="2"/><rect x="505" y="311" width="1" height="2"/><rect x="506" y="311" width="1" height="2"/><rect x="507" y="311" width="1" height="2"/><rect x="508" y="311" width="1" height="2"/><rect x="509" y="310" width="1" height="3"/><rect x="510" y="311" width="1" height="2"/><rect x="511" y="311" width="1" height="2"/><rect x="512" y="311" width="1" height="2"/><rect x="513" y="311" width="1" height="2"/><rect x="514" y="311" width="1" height="2"/><rect x="515" y="311" width="1" height="2"/><rect x="516" y="311" width="1" height="2"/><rect x="517" y="311" width="1" height="2"/><rect x="518" y="311" width="1" height="2"/><rect x="519" y="311" width="1" height="2"/><rect x="520" y="311" width="1" height="2"/><rect x="521" y="311" width="1" height="2"/><rect x="522" y="311" width="1" height="2"/><rect x="523" y="311" width="1" height="2"/><rect x="524" y="311" width="1" height="2"/><rect x="525" y="311" width="1" height="2"/><rect x="526" y="311" width="1" height="2"/><rect x="527" y="311" width="1" height="2"/><rect x="528" y="311" width="1" height="2"/><rect x="529" y="311" width="1" height="2"/><rect x="530" y="311" width="1" height="2"/><rect x="128" y="303" width="1" height="2"/><rect x="129" y="300" width="1" height="2"/><rect x="130" y="296" width="1" height="2"/><rect x="130" y="292" width="1" height="2"/><rect x="131" y="289" width="1" height="2"/><rect x="131" y="286" width="1" height="2"/><rect x="132" y="282" width="1" height="2"/><rect x="132" y="278" width="1" height="2"/><rect x="133" y="275" width="1" height="2"/><rect x="134" y="272" width="1" height="2"/><rect x="134" y="268" width="1" height="2"/><rect x="134" y="264" width="1" height="2"/><rect x="135" y="261" width="1" height="2"/><rect x="136" y="258" width="1" height="2"/><rect x="136" y="254" width="1" height="2"/><rect x="137" y="250" width="1" height="2"/><rect x="137" y="247" width="1" height="2"/><rect x="138" y="244" width="1" height="2"/><rect x="138" y="240" width="1" height="2"/><rect x="139" y="236" width="1" height="2"/><rect x="139" y="233" width="1" height="2"/><rect x="334" y="228" width="1" height="2"/><rect x="335" y="231" width="1" height="2"/><rect x="336" y="235" width="1" height="2"/><rect x="337" y="238" width="1" height="2"/><rect x="338" y="242" width="1" height="2"/><rect x="338" y="245" width="1" height="2"/><rect x="339" y="249" width="1" height="2"/><rect x="339" y="252" width="1" height="2"/><rect x="339" y="256" width="1" height="2"/><rect x="340" y="259" width="1" height="2"/><rect x="340" y="263" width="1" height="2"/><rect x="341" y="266" width="1" height="2"/><rect x="341" y="270" width="1" height="2"/><rect x="341" y="273" width="1" height="2"/><rect x="342" y="277" width="1" height="2"/><rect x="342" y="280" width="1" height="2"/><rect x="342" y="284" width="1" height="2"/><rect x="343" y="287" width="1" height="2"/><rect x="343" y="291" width="1" height="2"/><rect x="344" y="294" width="1" height="2"/><rect x="344" y="298" width="1" height="2"/><rect x="345" y="301" width="1" height="2"/><rect x="346" y="305" width="1" height="2"/></g>
<g fill="#ffffff" shape-rendering="crispEdges"><rect x="30" y="355" width="1" height="2"/><rect x="31" y="355" width="1" height="2"/><rect x="32" y="355" width="1" height="2"/><rect x="33" y="355" width="1" height="2"/><rect x="34" y="355" width="1" height="2"/><rect x="35" y="355" width="1" height="2"/><rect x="36" y="355" width="1" height="3"/><rect x="37" y="355" width="1" height="2"/><rect x="38" y="355" width="1" height="2"/><rect x="39" y="355" width="1" height="2"/><rect x="40" y="355" width="1" height="2"/><rect x="41" y="355" width="1" height="2"/><rect x="42" y="355" width="1" height="2"/><rect x="43" y="354" width="1" height="3"/><rect x="44" y="355" width="1" height="2"/><rect x="45" y="355" width="1" height="2"/><rect x="46" y="355" width="1" height="2"/><rect x="47" y="355" width="1" height="2"/><rect x="48" y="355" width="1" height="2"/><rect x="49" y="355" width="1" height="2"/><rect x="50" y="355" width="1" height="2"/><rect x="51" y="355" width="1" height="2"/><rect x="52" y="354" width="1" height="3"/><rect x="53" y="355" width="1" height="2"/><rect x="54" y="355" width="1" height="2"/><rect x="55" y="355" width="1" height="2"/><rect x="56" y="355" width="1" height="2"/><rect x="57" y="355" width="1" height="2"/><rect x="58" y="355" width="1" height="2"/><rect x="59" y="355" width="1" height="2"/><rect x="60" y="355" width="1" height="2"/><rect x="61" y="355" width="1" height="2"/><rect x="62" y="355" width="1" height="2"/><rect x="63" y="355" width="1" height="2"/><rect x="64" y="355" width="1" height="2"/><rect x="65" y="355" width="1" height="2"/><rect x="66" y="355" width="1" height="3"/><rect x="67" y="355" width="1" height="2"/><rect x="68" y="355" width="1" height="2"/><rect x="69" y="355" width="1" height="2"/><rect x="70" y="355" width="1" height="2"/><rect x="71" y="355" width="1" height="3"/><rect x="72" y="355" width="1" height="2"/><rect x="73" y="355" width="1" height="2"/><rect x="74" y="355" width="1" height="2"/><rect x="75" y="355" width="1" height="2"/><rect x="76" y="355" width="1" height="2"/><rect x="77" y="355" width="1" height="2"/><rect x="78" y="355" width="1" height="2"/><rect x="79" y="355" width="1" height="2"/><rect x="80" y="355" width="1" height="3"/><rect x="81" y="355" width="1" height="2"/><rect x="82" y="355" width="1" height="2"/><rect x="83" y="355" width="1" height="3"/><rect x="84" y="355" width="1" height="3"/><rect x="85" y="355" width="1" height="2"/><rect x="86" y="355" width="1" height="2"/><rect x="87" y="355" width="1" height="2"/><rect x="88" y="355" width="1" height="2"/><rect x="89" y="355" width="1" height="2"/><rect x="90" y="355" width="1" height="2"/><rect x="91" y="355" width="1" height="2"/><rect x="92" y="355" width="1" height="2"/><rect x="93" y="355" width="1" height="2"/><rect x="94" y="355" width="1" height="2"/><rect x="95" y="355" width="1" height="3"/><rect x="96" y="355" width="1" height="2"/><rect x="97" y="355" width="1" height="2"/><rect x="98" y="355" width="1" height="3"/><rect x="99" y="355" width="1" height="2"/><rect x="100" y="355" width="1" height="2"/><rect x="101" y="355" width="1" height="2"/><rect x="102" y="355" width="1" height="2"/><rect x="103" y="355" width="1" height="2"/><rect x="104" y="355" width="1" height="2"/><rect x="105" y="355" width="1" height="2"/><rect x="106" y="354" width="1" height="3"/><rect x="107" y="355" width="1" height="2"/><rect x="108" y="355" width="1" height="2"/><rect x="109" y="355" width="1" height="2"/><rect x="110" y="355" width="1" height="2"/><rect x="111" y="355" width="1" height="2"/><rect x="112" y="355" width="1" height="2"/><rect x="113" y="355" width="1" height="2"/><rect x="114" y="355" width="1" height="2"/><rect x="115" y="355" width="1" height="2"/><rect x="116" y="355" width="1" height="2"/><rect x="117" y="355" width="1" height="2"/><rect x="118" y="355" width="1" height="2"/><rect x="119" y="355" width="1" height="2"/><rect x="120" y="355" width="1" height="2"/><rect x="121" y="354" width="1" height="3"/><rect x="122" y="355" width="1" height="2"/><rect x="123" y="355" width="1" height="2"/><rect x="124" y="354" width="1" height="3"/><rect x="125" y="354" width="1" height="2"/><rect x="126" y="353" width="1" height="2"/><rect x="127" y="352" width="1" height="3"/><rect x="128" y="350" width="1" height="4"/><rect x="129" y="349" width="1" height="3"/><rect x="142" y="190" width="1" height="3"/><rect x="143" y="188" width="1" height="4"/><rect x="144" y="187" width="1" height="3"/><rect x="145" y="187" width="1" height="2"/><rect x="146" y="187" width="1" height="2"/><rect x="147" y="187" width="1" height="2"/><rect x="148" y="187" width="1" height="2"/><rect x="149" y="187" width="1" height="2"/><rect x="150" y="187" width="1" height="2"/><rect x="151" y="187" width="1" height="2"/><rect x="152" y="187" width="1" height="2"/><rect x="153" y="187" width="1" height="2"/><rect x="154" y="188" width="1" height="2"/><rect x="155" y="188" width="1" height="2"/><rect x="156" y="188" width="1" height="2"/><rect x="157" y="188" width="1" height="4"/><rect x="158" y="189" width="1" height="2"/><rect x="159" y="188" width="1" height="3"/><rect x="160" y="189" width="1" height="2"/><rect x="161" y="189" width="1" height="3"/><rect x="162" y="190" width="1" height="2"/><rect x="163" y="189" width="1" height="3"/><rect x="164" y="189" width="1" height="3"/><rect x="165" y="189" width="1" height="2"/><rect x="166" y="189" width="1" height="2"/><rect x="167" y="189" width="1" height="2"/><rect x="168" y="188" width="1" height="4"/><rect x="169" y="188" width="1" height="2"/><rect x="170" y="188" width="1" height="2"/><rect x="171" y="187" width="1" height="3"/><rect x="172" y="187" width="1" height="2"/><rect x="173" y="186" width="1" height="4"/><rect x="174" y="186" width="1" height="2"/><rect x="175" y="186" width="1" height="2"/><rect x="176" y="185" width="1" height="2"/><rect x="177" y="185" width="1" height="2"/><rect x="178" y="185" width="1" height="2"/><rect x="179" y="185" width="1" height="3"/><rect x="180" y="185" width="1" height="2"/><rect x="181" y="186" width="1" height="2"/><rect x="182" y="186" width="1" height="2"/><rect x="183" y="186" width="1" height="2"/><rect x="184" y="186" width="1" height="2"/><rect x="185" y="185" width="1" height="3"/><rect x="186" y="186" width="1" height="2"/><rect x="187" y="186" width="1" height="3"/><rect x="188" y="187" width="1" height="2"/><rect x="189" y="187" width="1" height="2"/><rect x="190" y="186" width="1" height="3"/><rect x="191" y="187" width="1" height="2"/><rect x="192" y="187" width="1" height="3"/><rect x="193" y="188" width="1" height="2"/><rect x="194" y="188" width="1" height="2"/><rect x="195" y="188" width="1" height="2"/><rect x="196" y="188" width="1" height="2"/><rect x="197" y="188" width="1" height="2"/><rect x="198" y="188" width="1" height="2"/><rect x="199" y="187" width="1" height="3"/><rect x="200" y="188" width="1" height="2"/><rect x="201" y="188" width="1" height="2"/><rect x="202" y="187" width="1" height="3"/><rect x="203" y="187" width="1" height="2"/><rect x="204" y="187" width="1" height="2"/><rect x="205" y="187" width="1" height="2"/><rect x="206" y="187" width="1" height="2"/><rect x="207" y="187" width="1" height="3"/><rect x="208" y="187" width="1" height="2"/><rect x="209" y="186" width="1" height="3"/><rect x="210" y="187" width="1" height="2"/><rect x="211" y="187" width="1" height="2"/><rect x="212" y="186" width="1" height="3"/><rect x="213" y="187" width="1" height="2"/><rect x="214" y="187" width="1" height="2"/><rect x="215" y="187" width="1" height="2"/><rect x="216" y="187" width="1" height="2"/><rect x="217" y="187" width="1" height="2"/><rect x="218" y="187" width="1" height="2"/><rect x="219" y="187" width="1" height="2"/><rect x="220" y="187" width="1" height="2"/><rect x="221" y="187" width="1" height="2"/><rect x="222" y="187" width="1" height="2"/><rect x="223" y="187" width="1" height="2"/><rect x="224" y="187" width="1" height="2"/><rect x="225" y="187" width="1" height="2"/><rect x="226" y="187" width="1" height="2"/><rect x="227" y="187" width="1" height="3"/><rect x="228" y="187" width="1" height="2"/><rect x="229" y="187" width="1" height="2"/><rect x="230" y="187" width="1" height="2"/><rect x="231" y="187" width="1" height="2"/><rect x="232" y="187" width="1" height="2"/><rect x="233" y="187" width="1" height="2"/><rect x="234" y="187" width="1" height="2"/><rect x="235" y="186" width="1" height="4"/><rect x="236" y="185" width="1" height="3"/><rect x="237" y="186" width="1" height="2"/><rect x="238" y="186" width="1" height="2"/><rect x="239" y="186" width="1" height="2"/><rect x="240" y="186" width="1" height="2"/><rect x="241" y="186" width="1" height="2"/><rect x="242" y="186" width="1" height="2"/><rect x="243" y="186" width="1" height="2"/><rect x="244" y="186" width="1" height="2"/><rect x="245" y="186" width="1" height="2"/><rect x="246" y="186" width="1" height="2"/><rect x="247" y="186" width="1" height="2"/><rect x="248" y="186" width="1" height="2"/><rect x="249" y="186" width="1" height="2"/><rect x="250" y="186" width="1" height="2"/><rect x="251" y="186" width="1" height="2"/><rect x="252" y="186" width="1" height="2"/><rect x="253" y="186" width="1" height="2"/><rect x="254" y="186" width="1" height="2"/><rect x="255" y="186" width="1" height="2"/><rect x="256" y="186" width="1" height="2"/><rect x="257" y="186" width="1" height="2"/><rect x="258" y="186" width="1" height="2"/><rect x="259" y="186" width="1" height="2"/><rect x="260" y="186" width="1" height="2"/><rect x="261" y="186" width="1" height="2"/><rect x="262" y="186" width="1" height="2"/><rect x="263" y="186" width="1" height="2"/><rect x="264" y="186" width="1" height="2"/><rect x="265" y="186" width="1" height="2"/><rect x="266" y="186" width="1" height="2"/><rect x="267" y="186" width="1" height="2"/><rect x="268" y="186" width="1" height="2"/><rect x="269" y="186" width="1" height="2"/><rect x="270" y="186" width="1" height="2"/><rect x="271" y="186" width="1" height="2"/><rect x="272" y="186" width="1" height="2"/><rect x="273" y="186" width="1" height="2"/><rect x="274" y="186" width="1" height="2"/><rect x="275" y="186" width="1" height="2"/><rect x="276" y="186" width="1" height="2"/><rect x="277" y="186" width="1" height="2"/><rect x="278" y="186" width="1" height="2"/><rect x="279" y="186" width="1" height="2"/><rect x="280" y="186" width="1" height="2"/><rect x="281" y="186" width="1" height="2"/><rect x="282" y="186" width="1" height="2"/><rect x="283" y="186" width="1" height="2"/><rect x="284" y="186" width="1" height="2"/><rect x="285" y="186" width="1" height="2"/><rect x="286" y="186" width="1" height="2"/><rect x="287" y="186" width="1" height="2"/><rect x="288" y="186" width="1" height="2"/><rect x="289" y="185" width="1" height="3"/><rect x="290" y="186" width="1" height="2"/><rect x="291" y="186" width="1" height="2"/><rect x="292" y="186" width="1" height="2"/><rect x="293" y="186" width="1" height="2"/><rect x="294" y="185" width="1" height="3"/><rect x="295" y="185" width="1" height="2"/><rect x="296" y="185" width="1" height="2"/><rect x="297" y="185" width="1" height="2"/><rect x="298" y="185" width="1" height="2"/><rect x="299" y="185" width="1" height="2"/><rect x="300" y="185" width="1" height="2"/><rect x="301" y="185" width="1" height="2"/><rect x="302" y="185" width="1" height="2"/><rect x="303" y="185" width="1" height="2"/><rect x="304" y="185" width="1" height="2"/><rect x="305" y="185" width="1" height="2"/><rect x="306" y="185" width="1" height="2"/><rect x="307" y="185" width="1" height="2"/><rect x="308" y="185" width="1" height="2"/><rect x="309" y="185" width="1" height="2"/><rect x="310" y="185" width="1" height="2"/><rect x="311" y="185" width="1" height="2"/><rect x="312" y="185" width="1" height="2"/><rect x="313" y="185" width="1" height="2"/><rect x="314" y="185" width="1" height="2"/><rect x="315" y="184" width="1" height="3"/><rect x="316" y="185" width="1" height="2"/><rect x="317" y="185" width="1" height="2"/><rect x="318" y="185" width="1" height="2"/><rect x="319" y="185" width="1" height="2"/><rect x="320" y="185" width="1" height="2"/><rect x="321" y="185" width="1" height="2"/><rect x="322" y="185" width="1" height="2"/><rect x="323" y="185" width="1" height="2"/><rect x="324" y="185" width="1" height="2"/><rect x="325" y="185" width="1" height="2"/><rect x="326" y="185" width="1" height="2"/><rect x="327" y="185" width="1" height="2"/><rect x="328" y="185" width="1" height="3"/><rect x="329" y="186" width="1" height="3"/><rect x="330" y="187" width="1" height="3"/><rect x="350" y="353" width="1" height="3"/><rect x="351" y="354" width="1" height="4"/><rect x="352" y="355" width="1" height="3"/><rect x="353" y="356" width="1" height="2"/><rect x="354" y="357" width="1" height="2"/><rect x="355" y="357" width="1" height="3"/><rect x="356" y="357" width="1" height="2"/><rect x="357" y="356" width="1" height="3"/><rect x="358" y="356" width="1" height="2"/><rect x="359" y="356" width="1" height="2"/><rect x="360" y="355" width="1" height="3"/><rect x="361" y="355" width="1" height="2"/><rect x="362" y="355" width="1" height="2"/><rect x="363" y="355" width="1" height="2"/><rect x="364" y="354" width="1" height="3"/><rect x="365" y="354" width="1" height="2"/><rect x="366" y="354" width="1" height="2"/><rect x="367" y="354" width="1" height="2"/><rect x="368" y="354" width="1" height="2"/><rect x="369" y="353" width="1" height="3"/><rect x="370" y="353" width="1" height="2"/><rect x="371" y="353" width="1" height="2"/><rect x="372" y="353" width="1" height="2"/><rect x="373" y="352" width="1" height="3"/><rect x="374" y="353" width="1" height="2"/><rect x="375" y="352" width="1" height="3"/><rect x="376" y="353" width="1" height="2"/><rect x="377" y="352" width="1" height="3"/><rect x="378" y="352" width="1" height="2"/><rect x="379" y="352" width="1" height="2"/><rect x="380" y="352" width="1" height="2"/><rect x="381" y="352" width="1" height="2"/><rect x="382" y="352" width="1" height="2"/><rect x="383" y="352" width="1" height="2"/><rect x="384" y="352" width="1" height="2"/><rect x="385" y="352" width="1" height="2"/><rect x="386" y="352" width="1" height="2"/><rect x="387" y="352" width="1" height="2"/><rect x="388" y="352" width="1" height="2"/><rect x="389" y="352" width="1" height="2"/><rect x="390" y="352" width="1" height="2"/><rect x="391" y="352" width="1" height="2"/><rect x="392" y="352" width="1" height="2"/><rect x="393" y="352" width="1" height="2"/><rect x="394" y="352" width="1" height="2"/><rect x="395" y="352" width="1" height="2"/><rect x="396" y="352" width="1" height="2"/><rect x="397" y="352" width="1" height="2"/><rect x="398" y="352" width="1" height="2"/><rect x="399" y="353" width="1" height="2"/><rect x="400" y="353" width="1" height="2"/><rect x="401" y="353" width="1" height="2"/><rect x="402" y="353" width="1" height="2"/><rect x="403" y="353" width="1" height="2"/><rect x="404" y="353" width="1" height="2"/><rect x="405" y="353" width="1" height="2"/><rect x="406" y="353" width="1" height="2"/><rect x="407" y="353" width="1" height="2"/><rect x="408" y="353" width="1" height="2"/><rect x="409" y="353" width="1" height="2"/><rect x="410" y="353" width="1" height="2"/><rect x="411" y="353" width="1" height="2"/><rect x="412" y="353" width="1" height="3"/><rect x="413" y="353" width="1" height="2"/><rect x="414" y="353" width="1" height="2"/><rect x="415" y="353" width="1" height="2"/><rect x="416" y="353" width="1" height="2"/><rect x="417" y="353" width="1" height="2"/><rect x="418" y="353" width="1" height="2"/><rect x="419" y="353" width="1" height="2"/><rect x="420" y="353" width="1" height="2"/><rect x="421" y="353" width="1" height="2"/><rect x="422" y="353" width="1" height="2"/><rect x="423" y="353" width="1" height="3"/><rect x="424" y="353" width="1" height="2"/><rect x="425" y="353" width="1" height="2"/><rect x="426" y="353" width="1" height="2"/><rect x="427" y="353" width="1" height="3"/><rect x="428" y="354" width="1" height="2"/><rect x="429" y="353" width="1" height="3"/><rect x="430" y="354" width="1" height="2"/><rect x="431" y="354" width="1" height="2"/><rect x="432" y="354" width="1" height="2"/><rect x="433" y="354" width="1" height="2"/><rect x="434" y="354" width="1" height="2"/><rect x="435" y="354" width="1" height="2"/><rect x="436" y="354" width="1" height="2"/><rect x="437" y="354" width="1" height="2"/><rect x="438" y="354" width="1" height="2"/><rect x="439" y="354" width="1" height="2"/><rect x="440" y="354" width="1" height="2"/><rect x="441" y="354" width="1" height="2"/><rect x="442" y="354" width="1" height="2"/><rect x="443" y="354" width="1" height="2"/><rect x="444" y="354" width="1" height="2"/><rect x="445" y="354" width="1" height="2"/><rect x="446" y="354" width="1" height="2"/><rect x="447" y="354" width="1" height="2"/><rect x="448" y="354" width="1" height="2"/><rect x="449" y="354" width="1" height="2"/><rect x="450" y="354" width="1" height="2"/><rect x="451" y="354" width="1" height="2"/><rect x="452" y="354" width="1" height="2"/><rect x="453" y="354" width="1" height="2"/><rect x="454" y="354" width="1" height="2"/><rect x="455" y="354" width="1" height="2"/><rect x="456" y="354" width="1" height="2"/><rect x="457" y="354" width="1" height="2"/><rect x="458" y="354" width="1" height="2"/><rect x="459" y="354" width="1" height="2"/><rect x="460" y="353" width="1" height="3"/><rect x="461" y="354" width="1" height="2"/><rect x="462" y="354" width="1" height="2"/><rect x="463" y="354" width="1" height="2"/><rect x="464" y="354" width="1" height="2"/><rect x="465" y="354" width="1" height="2"/><rect x="466" y="354" width="1" height="3"/><rect x="467" y="354" width="1" height="2"/><rect x="468" y="354" width="1" height="2"/><rect x="469" y="354" width="1" height="2"/><rect x="470" y="354" width="1" height="2"/><rect x="471" y="354" width="1" height="2"/><rect x="472" y="354" width="1" height="2"/><rect x="473" y="354" width="1" height="2"/><rect x="474" y="354" width="1" height="3"/><rect x="475" y="354" width="1" height="2"/><rect x="476" y="354" width="1" height="3"/><rect x="477" y="354" width="1" height="2"/><rect x="478" y="354" width="1" height="2"/><rect x="479" y="354" width="1" height="2"/><rect x="480" y="354" width="1" height="2"/><rect x="481" y="354" width="1" height="2"/><rect x="482" y="354" width="1" height="2"/><rect x="483" y="354" width="1" height="2"/><rect x="484" y="354" width="1" height="3"/><rect x="485" y="354" width="1" height="2"/><rect x="486" y="354" width="1" height="2"/><rect x="487" y="354" width="1" height="2"/><rect x="488" y="354" width="1" height="2"/><rect x="489" y="354" width="1" height="2"/><rect x="490" y="354" width="1" height="2"/><rect x="491" y="354" width="1" height="2"/><rect x="492" y="354" width="1" height="2"/><rect x="493" y="354" width="1" height="2"/><rect x="494" y="354" width="1" height="2"/><rect x="495" y="354" width="1" height="2"/><rect x="496" y="354" width="1" height="2"/><rect x="497" y="354" width="1" height="2"/><rect x="498" y="354" width="1" height="2"/><rect x="499" y="354" width="1" height="2"/><rect x="500" y="354" width="1" height="2"/><rect x="501" y="354" width="1" height="2"/><rect x="502" y="354" width="1" height="2"/><rect x="503" y="354" width="1" height="2"/><rect x="504" y="354" width="1" height="2"/><rect x="505" y="354" width="1" height="2"/><rect x="506" y="354" width="1" height="2"/><rect x="507" y="354" width="1" height="2"/><rect x="508" y="354" width="1" height="2"/><rect x="509" y="354" width="1" height="2"/><rect x="510" y="354" width="1" height="2"/><rect x="511" y="354" width="1" height="2"/><rect x="512" y="354" width="1" height="3"/><rect x="513" y="354" width="1" height="2"/><rect x="514" y="354" width="1" height="2"/><rect x="515" y="353" width="1" height="3"/><rect x="516" y="353" width="1" height="3"/><rect x="517" y="354" width="1" height="2"/><rect x="518" y="354" width="1" height="2"/><rect x="519" y="354" width="1" height="2"/><rect x="520" y="354" width="1" height="2"/><rect x="521" y="354" width="1" height="2"/><rect x="522" y="354" width="1" height="2"/><rect x="523" y="354" width="1" height="2"/><rect x="524" y="354" width="1" height="2"/><rect x="525" y="354" width="1" height="2"/><rect x="526" y="354" width="1" height="2"/><rect x="527" y="354" width="1" height="2"/><rect x="528" y="354" width="1" height="2"/><rect x="529" y="354" width="1" height="2"/><rect x="530" y="355" width="1" height="2"/><rect x="130" y="349" width="1" height="2"/><rect x="131" y="346" width="1" height="2"/><rect x="131" y="342" width="1" height="2"/><rect x="132" y="338" width="1" height="2"/><rect x="132" y="335" width="1" height="2"/><rect x="133" y="332" width="1" height="2"/><rect x="133" y="328" width="1" height="2"/><rect x="133" y="324" width="1" height="2"/><rect x="133" y="321" width="1" height="2"/><rect x="134" y="318" width="1" height="2"/><rect x="134" y="314" width="1" height="2"/><rect x="134" y="310" width="1" height="2"/><rect x="134" y="307" width="1" height="2"/><rect x="134" y="304" width="1" height="2"/><rect x="135" y="300" width="1" height="2"/><rect x="135" y="296" width="1" height="2"/><rect x="135" y="293" width="1" height="2"/><rect x="135" y="290" width="1" height="2"/><rect x="135" y="286" width="1" height="2"/><rect x="136" y="282" width="1" height="2"/><rect x="136" y="279" width="1" height="2"/><rect x="136" y="276" width="1" height="2"/><rect x="136" y="272" width="1" height="2"/><rect x="136" y="268" width="1" height="2"/><rect x="136" y="265" width="1" height="2"/><rect x="137" y="262" width="1" height="2"/><rect x="137" y="258" width="1" height="2"/><rect x="137" y="254" width="1" height="2"/><rect x="137" y="251" width="1" height="2"/><rect x="138" y="248" width="1" height="2"/><rect x="138" y="244" width="1" height="2"/><rect x="138" y="240" width="1" height="2"/><rect x="138" y="237" width="1" height="2"/><rect x="138" y="234" width="1" height="2"/><rect x="138" y="230" width="1" height="2"/><rect x="139" y="226" width="1" height="2"/><rect x="139" y="223" width="1" height="2"/><rect x="139" y="220" width="1" height="2"/><rect x="139" y="216" width="1" height="2"/><rect x="139" y="212" width="1" height="2"/><rect x="140" y="209" width="1" height="2"/><rect x="140" y="206" width="1" height="2"/><rect x="140" y="202" width="1" height="2"/><rect x="141" y="198" width="1" height="2"/><rect x="141" y="195" width="1" height="2"/><rect x="142" y="192" width="1" height="2"/><rect x="331" y="188" width="1" height="2"/><rect x="332" y="192" width="1" height="2"/><rect x="333" y="195" width="1" height="2"/><rect x="333" y="198" width="1" height="2"/><rect x="334" y="202" width="1" height="2"/><rect x="334" y="206" width="1" height="2"/><rect x="335" y="209" width="1" height="2"/><rect x="335" y="212" width="1" height="2"/><rect x="335" y="216" width="1" height="2"/><rect x="336" y="220" width="1" height="2"/><rect x="336" y="223" width="1" height="2"/><rect x="336" y="226" width="1" height="2"/><rect x="336" y="230" width="1" height="2"/><rect x="337" y="234" width="1" height="2"/><rect x="337" y="237" width="1" height="2"/><rect x="337" y="240" width="1" height="2"/><rect x="338" y="244" width="1" height="2"/><rect x="338" y="248" width="1" height="2"/><rect x="338" y="251" width="1" height="2"/><rect x="339" y="254" width="1" height="2"/><rect x="339" y="258" width="1" height="2"/><rect x="339" y="262" width="1" height="2"/><rect x="340" y="265" width="1" height="2"/><rect x="340" y="268" width="1" height="2"/><rect x="340" y="272" width="1" height="2"/><rect x="340" y="276" width="1" height="2"/><rect x="341" y="279" width="1" height="2"/><rect x="341" y="282" width="1" height="2"/><rect x="341" y="286" width="1" height="2"/><rect x="341" y="290" width="1" height="2"/><rect x="341" y="293" width="1" height="2"/><rect x="342" y="296" width="1" height="2"/><rect x="342" y="300" width="1" height="2"/><rect x="342" y="304" width="1" height="2"/><rect x="342" y="307" width="1" height="2"/><rect x="343" y="310" width="1" height="2"/><rect x="343" y="314" width="1" height="2"/><rect x="343" y="318" width="1" height="2"/><rect x="343" y="321" width="1" height="2"/><rect x="344" y="324" width="1" height="2"/><rect x="344" y="328" width="1" height="2"/><rect x="344" y="332" width="1" height="2"/><rect x="345" y="335" width="1" height="2"/><rect x="345" y="338" width="1" height="2"/><rect x="346" y="342" width="1" height="2"/><rect x="347" y="345" width="1" height="2"/><rect x="348" y="349" width="1" height="2"/><rect x="349" y="352" width="1" height="2"/></g>
</svg>
<span class="t" style="left:32.00px;top:87px;font-size:11.40px;line-height:11.40px;color:#fff;font-weight:normal;transform:scaleX(0.8855);transform-origin:0 0;">1.028V</span>
<span class="t" style="left:31.50px;top:441px;font-size:11.40px;line-height:11.40px;color:#fff;font-weight:normal;transform:scaleX(0.9005);transform-origin:0 0;">-972.0mV</span>
<span class="t" style="left:471.50px;top:441px;font-size:11.40px;line-height:11.40px;color:#fff;font-weight:normal;transform:scaleX(0.9518);transform-origin:0 0;">5.000ns/div</span>
<span class="t" style="left:103.00px;top:218px;font-size:14.20px;line-height:14.20px;color:#ffff00;font-weight:bold;transform:scaleX(0.8253);transform-origin:0 0;">C2</span>
<span class="t" style="left:94.60px;top:295px;font-size:14.20px;line-height:14.20px;color:#00ff00;font-weight:bold;transform:scaleX(0.7757);transform-origin:0 0;">C1</span>
<span class="t" style="left:89.50px;top:336px;font-size:14.20px;line-height:14.20px;color:#fff;font-weight:bold;transform:scaleX(0.8866);transform-origin:0 0;">M1</span>
<div style="left:6px;top:139px;width:17px;height:5px;background:#c0c0c0;box-shadow:inset 0 1px #fff;"></div>
<div style="left:6px;top:143px;width:17px;height:15px;background:#c0c0c0;box-shadow:inset 0 1px #fff,inset 0 -1px #000;"></div>
<div style="left:8px;top:141px;width:4px;height:1px;background:#222"></div>
<div style="left:14px;top:141px;width:4px;height:1px;background:#222"></div>
<span class="t" style="left:8.00px;top:145px;font-size:12.50px;line-height:12.50px;color:#000;font-weight:normal;transform:scaleX(0.7812);transform-origin:0 0;">C2</span>
<svg style="left:23px;top:139px;" width="8" height="19" viewBox="0 0 8 19"><path d="M0 1L5.5 8L0 8Z" fill="#00ff00" stroke="#000" stroke-width="0.6"/><path d="M0 6L6.5 11.5L0 18Z" fill="#ffff00" stroke="#000" stroke-width="0.6"/></svg>
<div style="left:6px;top:267px;width:17px;height:15px;background:#fff;box-shadow:inset 0 -1px #000;"></div>
<span class="t" style="left:7.50px;top:269px;font-size:12.50px;line-height:12.50px;color:#000;font-weight:normal;transform:scaleX(0.7482);transform-origin:0 0;">M1</span>
<svg style="left:22px;top:266px;" width="9" height="17" viewBox="0 0 9 17"><path d="M1 1L6.5 8.5L1 16" fill="#fff" stroke="#000" stroke-width="1"/><rect x="0" y="1" width="1.5" height="15" fill="#fff"/></svg>
<div style="left:532px;top:79px;width:1px;height:377px;background:#808080"></div>
<div style="left:533px;top:79px;width:1px;height:377px;background:#fff"></div>
<div style="left:537px;top:81px;width:102px;height:16px;background:#808080"></div>
<span class="t" style="left:539.00px;top:83px;font-size:12.50px;line-height:12.50px;color:#c0c0c0;font-weight:bold;transform:scaleX(0.9510);transform-origin:0 0;">Waveform</span>
<div style="left:537px;top:97px;width:102px;height:22px;background:#c0c0c0;box-shadow:inset -1px -1px #000,inset 1px 1px #fff,inset -2px -2px #808080;"></div>
<div style="left:539px;top:99px;width:6px;height:19px;background:#00ff00"></div>
<span class="t" style="left:547.80px;top:103px;font-size:11.40px;line-height:11.40px;color:#000;font-weight:normal;transform:scaleX(0.9271);transform-origin:0 0;">C1 200.0mV/div</span>
<div style="left:537px;top:119px;width:102px;height:22px;background:#c0c0c0;box-shadow:inset -1px -1px #000,inset 1px 1px #fff,inset -2px -2px #808080;"></div>
<div style="left:539px;top:121px;width:6px;height:19px;background:#ffff00"></div>
<span class="t" style="left:547.80px;top:125px;font-size:11.40px;line-height:11.40px;color:#000;font-weight:normal;transform:scaleX(0.9271);transform-origin:0 0;">C2 200.0mV/div</span>
<div style="left:537px;top:141px;width:102px;height:22px;background:#c0c0c0;box-shadow:inset 1px 1px #000,inset -1px -1px #fff,inset 2px 2px #808080;"></div>
<div style="left:539px;top:143px;width:6px;height:19px;background:#ffffff"></div>
<span class="t" style="left:547.80px;top:147px;font-size:11.40px;line-height:11.40px;color:#000;font-weight:normal;transform:scaleX(0.9130);transform-origin:0 0;">M1 200.0mV/div</span>
<div style="left:537px;top:169px;width:102px;height:16px;background:#808080"></div>
<span class="t" style="left:540.00px;top:171px;font-size:12.50px;line-height:12.50px;color:#c0c0c0;font-weight:bold;transform:scaleX(0.9434);transform-origin:0 0;">Measurement</span>
<div style="left:537px;top:185px;width:102px;height:32px;background:#c0c0c0;box-shadow:inset -1px -1px #000,inset 1px 1px #fff,inset -2px -2px #808080;"></div>
<div style="left:539px;top:187px;width:6px;height:29px;background:#fff"></div>
<span class="t" style="left:541.00px;top:189px;font-size:11.40px;line-height:11.40px;color:#000;font-weight:normal;transform:scaleX(0.6322);transform-origin:0 0;-webkit-text-stroke:0.35px #000;">1</span>
<span class="t" style="left:547.50px;top:189px;font-size:11.40px;line-height:11.40px;color:#000;font-weight:normal;transform:scaleX(0.8537);transform-origin:0 0;">High</span>
<span class="t" style="left:582.00px;top:189px;font-size:11.40px;line-height:11.40px;color:#000;font-weight:normal;transform:scaleX(0.7888);transform-origin:0 0;">M1</span>
<svg style="left:604px;top:186px;" width="20" height="16" viewBox="0 0 20 16"><path d="M4.2 11.5H6.5L7.3 10.3V7.5L8.2 5.5V3L9 2.3H10.5L11.3 3V5.5L12.3 6.8V8.5L13.4 10V12.5L14.5 13.5L17.5 11.2" fill="none" stroke="#000" stroke-width="1.15"/></svg>
<span class="t" style="left:567.10px;top:203px;font-size:11.40px;line-height:11.40px;color:#000;font-weight:normal;transform:scaleX(0.9282);transform-origin:0 0;">477.4432mV</span>
<div style="left:537px;top:217px;width:102px;height:32px;background:#c0c0c0;box-shadow:inset -1px -1px #000,inset 1px 1px #fff,inset -2px -2px #808080;"></div>
<div style="left:539px;top:219px;width:6px;height:29px;background:#fff"></div>
<span class="t" style="left:541.00px;top:221px;font-size:11.40px;line-height:11.40px;color:#000;font-weight:normal;transform:scaleX(0.6322);transform-origin:0 0;-webkit-text-stroke:0.35px #000;">2</span>
<span class="t" style="left:547.50px;top:221px;font-size:11.40px;line-height:11.40px;color:#000;font-weight:normal;transform:scaleX(0.8127);transform-origin:0 0;">Low</span>
<span class="t" style="left:582.00px;top:221px;font-size:11.40px;line-height:11.40px;color:#000;font-weight:normal;transform:scaleX(0.7888);transform-origin:0 0;">M1</span>
<svg style="left:604px;top:218px;" width="20" height="16" viewBox="0 0 20 16"><path d="M4.2 11.5H6.5L7.3 10.3V7.5L8.2 5.5V3L9 2.3H10.5L11.3 3V5.5L12.3 6.8V8.5L13.4 10V12.5L14.5 13.5L17.5 11.2" fill="none" stroke="#000" stroke-width="1.15"/></svg>
<span class="t" style="left:567.10px;top:235px;font-size:11.40px;line-height:11.40px;color:#000;font-weight:normal;transform:scaleX(0.9393);transform-origin:0 0;">-439.2648mV</span>
<div style="left:537px;top:249px;width:102px;height:32px;background:#c0c0c0;box-shadow:inset -1px -1px #000,inset 1px 1px #fff,inset -2px -2px #808080;"></div>
<div style="left:539px;top:251px;width:6px;height:29px;background:#fff"></div>
<span class="t" style="left:541.00px;top:253px;font-size:11.40px;line-height:11.40px;color:#000;font-weight:normal;transform:scaleX(0.6322);transform-origin:0 0;-webkit-text-stroke:0.35px #000;">3</span>
<span class="t" style="left:547.50px;top:253px;font-size:11.40px;line-height:11.40px;color:#000;font-weight:normal;transform:scaleX(0.8079);transform-origin:0 0;">Ampl</span>
<span class="t" style="left:582.00px;top:253px;font-size:11.40px;line-height:11.40px;color:#000;font-weight:normal;transform:scaleX(0.7888);transform-origin:0 0;">M1</span>
<svg style="left:604px;top:250px;" width="20" height="16" viewBox="0 0 20 16"><path d="M4.2 11.5H6.5L7.3 10.3V7.5L8.2 5.5V3L9 2.3H10.5L11.3 3V5.5L12.3 6.8V8.5L13.4 10V12.5L14.5 13.5L17.5 11.2" fill="none" stroke="#000" stroke-width="1.15"/></svg>
<span class="t" style="left:567.10px;top:267px;font-size:11.40px;line-height:11.40px;color:#000;font-weight:normal;transform:scaleX(0.9282);transform-origin:0 0;">916.7080mV</span>
<div style="left:537px;top:281px;width:102px;height:32px;background:#c0c0c0;box-shadow:inset -1px -1px #000,inset 1px 1px #fff,inset -2px -2px #808080;"></div>
<div style="left:539px;top:283px;width:6px;height:29px;background:#fff"></div>
<span class="t" style="left:541.00px;top:285px;font-size:11.40px;line-height:11.40px;color:#000;font-weight:normal;transform:scaleX(0.6322);transform-origin:0 0;-webkit-text-stroke:0.35px #000;">4</span>
<span class="t" style="left:547.50px;top:285px;font-size:11.40px;line-height:11.40px;color:#000;font-weight:normal;transform:scaleX(0.8608);transform-origin:0 0;">+Crs</span>
<span class="t" style="left:582.00px;top:285px;font-size:11.40px;line-height:11.40px;color:#000;font-weight:normal;transform:scaleX(0.7888);transform-origin:0 0;">M1</span>
<svg style="left:604px;top:282px;" width="20" height="16" viewBox="0 0 20 16"><path d="M4.2 11.5H6.5L7.3 10.3V7.5L8.2 5.5V3L9 2.3H10.5L11.3 3V5.5L12.3 6.8V8.5L13.4 10V12.5L14.5 13.5L17.5 11.2" fill="none" stroke="#000" stroke-width="1.15"/></svg>
<span class="t" style="left:567.10px;top:299px;font-size:11.40px;line-height:11.40px;color:#000;font-weight:normal;transform:scaleX(0.9401);transform-origin:0 0;">29.56066ns</span>
<div style="left:537px;top:313px;width:102px;height:32px;background:#c0c0c0;box-shadow:inset -1px -1px #000,inset 1px 1px #fff,inset -2px -2px #808080;"></div>
<div style="left:539px;top:315px;width:6px;height:29px;background:#fff"></div>
<span class="t" style="left:541.00px;top:317px;font-size:11.40px;line-height:11.40px;color:#000;font-weight:normal;transform:scaleX(0.6322);transform-origin:0 0;-webkit-text-stroke:0.35px #000;">5</span>
<span class="t" style="left:547.50px;top:317px;font-size:11.40px;line-height:11.40px;color:#000;font-weight:normal;transform:scaleX(0.8717);transform-origin:0 0;">Fall</span>
<span class="t" style="left:582.00px;top:317px;font-size:11.40px;line-height:11.40px;color:#000;font-weight:normal;transform:scaleX(0.7888);transform-origin:0 0;">M1</span>
<svg style="left:604px;top:314px;" width="20" height="16" viewBox="0 0 20 16"><path d="M4.2 11.5H6.5L7.3 10.3V7.5L8.2 5.5V3L9 2.3H10.5L11.3 3V5.5L12.3 6.8V8.5L13.4 10V12.5L14.5 13.5L17.5 11.2" fill="none" stroke="#000" stroke-width="1.15"/></svg>
<span class="t" style="left:567.10px;top:331px;font-size:11.40px;line-height:11.40px;color:#000;font-weight:normal;transform:scaleX(0.9401);transform-origin:0 0;">707.9506ps</span>
<div style="left:537px;top:345px;width:102px;height:32px;background:#c0c0c0;box-shadow:inset 1px 1px #000,inset -1px -1px #fff,inset 2px 2px #808080;"></div>
<div style="left:539px;top:347px;width:6px;height:29px;background:#fff"></div>
<span class="t" style="left:541.00px;top:349px;font-size:11.40px;line-height:11.40px;color:#000;font-weight:normal;transform:scaleX(0.6322);transform-origin:0 0;-webkit-text-stroke:0.35px #000;">6</span>
<span class="t" style="left:547.50px;top:349px;font-size:11.40px;line-height:11.40px;color:#000;font-weight:normal;transform:scaleX(0.8333);transform-origin:0 0;">Rise</span>
<span class="t" style="left:582.00px;top:349px;font-size:11.40px;line-height:11.40px;color:#000;font-weight:normal;transform:scaleX(0.7888);transform-origin:0 0;">M1</span>
<svg style="left:604px;top:346px;" width="20" height="16" viewBox="0 0 20 16"><path d="M4.2 11.5H6.5L7.3 10.3V7.5L8.2 5.5V3L9 2.3H10.5L11.3 3V5.5L12.3 6.8V8.5L13.4 10V12.5L14.5 13.5L17.5 11.2" fill="none" stroke="#000" stroke-width="1.15"/></svg>
<span class="t" style="left:567.10px;top:363px;font-size:11.40px;line-height:11.40px;color:#000;font-weight:normal;transform:scaleX(0.9401);transform-origin:0 0;">690.8206ps</span>
<div style="left:6px;top:456px;width:526px;height:1px;background:#808080"></div>
<div style="left:6px;top:458px;width:638px;height:1px;background:#fff"></div>
<div style="left:6px;top:460px;width:44px;height:22px;background:#c0c0c0;box-shadow:inset -1px -1px #000,inset 1px 1px #fff,inset -2px -2px #808080;"></div>
<div style="left:6px;top:460px;width:7px;height:21px;background:#fff"></div>
<span class="t" style="left:14.50px;top:465px;font-size:12.50px;line-height:12.50px;color:#000;font-weight:normal;transform:scaleX(0.7482);transform-origin:0 0;">M1</span>
<svg style="left:33px;top:464px;" width="13" height="10" viewBox="0 0 13 10"><path d="M1.5 8H11.5L6.5 3Z" fill="#000"/></svg>
<div style="left:66px;top:459px;width:84px;height:23px;background:#fff;box-shadow:inset 1px 1px #808080,inset -1px -1px #fff,inset 2px 2px #000,inset -2px -2px #c0c0c0;"></div>
<span class="t" style="left:70.00px;top:464px;font-size:11.40px;line-height:11.40px;color:#000;font-weight:normal;transform:scaleX(0.9621);transform-origin:0 0;">200.0mV/</span>
<div style="left:119px;top:461px;width:15px;height:19px;background:#c0c0c0;box-shadow:inset -1px -1px #000,inset 1px 1px #fff,inset -2px -2px #808080;"></div>
<svg style="left:119px;top:461px;" width="15" height="19" viewBox="0 0 15 19"><g shape-rendering="crispEdges" fill="none" stroke="#000"><rect x="3.5" y="3.5" width="8" height="9"/><rect x="5.5" y="5.5" width="4" height="2"/></g><rect x="5" y="9" width="1" height="2" fill="#000"/><rect x="9" y="9" width="1" height="2" fill="#000"/></svg>
<div style="left:134px;top:461px;width:15px;height:9px;background:#c0c0c0;box-shadow:inset -1px -1px #000,inset 1px 1px #fff,inset -2px -2px #808080;"></div>
<div style="left:134px;top:470px;width:15px;height:10px;background:#c0c0c0;box-shadow:inset -1px -1px #000,inset 1px 1px #fff,inset -2px -2px #808080;"></div>
<svg style="left:134px;top:461px;" width="15" height="19" viewBox="0 0 15 19"><path d="M5 6h5l-2.5-2.5z M5 13h5l-2.5 2.5z" fill="#000"/></svg>
<div style="left:152px;top:459px;width:82px;height:23px;background:#c0c0c0;box-shadow:inset 1px 1px #808080,inset -1px -1px #fff,inset 2px 2px #000,inset -2px -2px #c0c0c0;"></div>
<span class="t" style="left:155.00px;top:464px;font-size:11.40px;line-height:11.40px;color:#888;font-weight:normal;transform:scaleX(0.8964);transform-origin:0 0;">0.0V</span>
<div style="left:203px;top:461px;width:15px;height:19px;background:#c0c0c0;box-shadow:inset -1px -1px #000,inset 1px 1px #fff,inset -2px -2px #808080;"></div>
<svg style="left:203px;top:461px;" width="15" height="19" viewBox="0 0 15 19"><g shape-rendering="crispEdges" fill="none" stroke="#000"><rect x="3.5" y="3.5" width="8" height="9"/><rect x="5.5" y="5.5" width="4" height="2"/></g><rect x="5" y="9" width="1" height="2" fill="#000"/><rect x="9" y="9" width="1" height="2" fill="#000"/></svg>
<div style="left:218px;top:461px;width:15px;height:9px;background:#c0c0c0;box-shadow:inset -1px -1px #000,inset 1px 1px #fff,inset -2px -2px #808080;"></div>
<div style="left:218px;top:470px;width:15px;height:10px;background:#c0c0c0;box-shadow:inset -1px -1px #000,inset 1px 1px #fff,inset -2px -2px #808080;"></div>
<svg style="left:218px;top:461px;" width="15" height="19" viewBox="0 0 15 19"><path d="M5 6h5l-2.5-2.5z M5 13h5l-2.5 2.5z" fill="#808080"/></svg>
<div style="left:253px;top:459px;width:30px;height:23px;background:#fff;box-shadow:inset 1px 1px #000,inset -1px -1px #fff,inset 2px 2px #808080;"></div>
<span class="t" style="left:257.50px;top:465px;font-size:11.40px;line-height:11.40px;color:#000;font-weight:normal;transform:scaleX(0.8893);transform-origin:0 0;">Main</span>
<div style="left:283px;top:459px;width:30px;height:23px;background:#c0c0c0;box-shadow:inset -1px -1px #000,inset 1px 1px #fff,inset -2px -2px #808080;"></div>
<svg style="left:283px;top:459px;" width="30" height="23" viewBox="0 0 30 23"><circle cx="13" cy="8.5" r="5.4" fill="none" stroke="#000" stroke-width="1.5"/><path d="M17 13L22.5 18.5" stroke="#000" stroke-width="2.8"/><path d="M17.8 13.2L22.8 18.2" stroke="#fff" stroke-width="0.5" stroke-dasharray="1 1"/><text x="13" y="12.3" font-size="10" font-weight="bold" text-anchor="middle" font-family="Liberation Sans" fill="#000" stroke="#000" stroke-width="0.3">1</text></svg>
<div style="left:313px;top:459px;width:30px;height:23px;background:#c0c0c0;box-shadow:inset -1px -1px #000,inset 1px 1px #fff,inset -2px -2px #808080;"></div>
<svg style="left:313px;top:459px;" width="30" height="23" viewBox="0 0 30 23"><circle cx="13" cy="8.5" r="5.4" fill="none" stroke="#000" stroke-width="1.5"/><path d="M17 13L22.5 18.5" stroke="#000" stroke-width="2.8"/><path d="M17.8 13.2L22.8 18.2" stroke="#fff" stroke-width="0.5" stroke-dasharray="1 1"/><text x="13" y="12.3" font-size="10" font-weight="bold" text-anchor="middle" font-family="Liberation Sans" fill="#000" stroke="#000" stroke-width="0.3">2</text></svg>
<div style="left:361px;top:459px;width:88px;height:23px;background:#c0c0c0;box-shadow:inset 1px 1px #808080,inset -1px -1px #fff,inset 2px 2px #000,inset -2px -2px #c0c0c0;"></div>
<span class="t" style="left:363.50px;top:464px;font-size:11.40px;line-height:11.40px;color:#888;font-weight:normal;transform:scaleX(0.9580);transform-origin:0 0;">5.00000ns</span>
<div style="left:418px;top:461px;width:15px;height:19px;background:#c0c0c0;box-shadow:inset -1px -1px #000,inset 1px 1px #fff,inset -2px -2px #808080;"></div>
<svg style="left:418px;top:461px;" width="15" height="19" viewBox="0 0 15 19"><g shape-rendering="crispEdges" fill="none" stroke="#000"><rect x="3.5" y="3.5" width="8" height="9"/><rect x="5.5" y="5.5" width="4" height="2"/></g><rect x="5" y="9" width="1" height="2" fill="#000"/><rect x="9" y="9" width="1" height="2" fill="#000"/></svg>
<div style="left:433px;top:461px;width:15px;height:9px;background:#c0c0c0;box-shadow:inset -1px -1px #000,inset 1px 1px #fff,inset -2px -2px #808080;"></div>
<div style="left:433px;top:470px;width:15px;height:10px;background:#c0c0c0;box-shadow:inset -1px -1px #000,inset 1px 1px #fff,inset -2px -2px #808080;"></div>
<svg style="left:433px;top:461px;" width="15" height="19" viewBox="0 0 15 19"><path d="M5 6h5l-2.5-2.5z M5 13h5l-2.5 2.5z" fill="#808080"/></svg>
<div style="left:452px;top:459px;width:80px;height:23px;background:#c0c0c0;box-shadow:inset 1px 1px #808080,inset -1px -1px #fff,inset 2px 2px #000,inset -2px -2px #c0c0c0;"></div>
<span class="t" style="left:455.00px;top:464px;font-size:11.40px;line-height:11.40px;color:#888;font-weight:normal;transform:scaleX(0.8978);transform-origin:0 0;">21.500n</span>
<div style="left:501px;top:461px;width:15px;height:19px;background:#c0c0c0;box-shadow:inset -1px -1px #000,inset 1px 1px #fff,inset -2px -2px #808080;"></div>
<svg style="left:501px;top:461px;" width="15" height="19" viewBox="0 0 15 19"><g shape-rendering="crispEdges" fill="none" stroke="#000"><rect x="3.5" y="3.5" width="8" height="9"/><rect x="5.5" y="5.5" width="4" height="2"/></g><rect x="5" y="9" width="1" height="2" fill="#000"/><rect x="9" y="9" width="1" height="2" fill="#000"/></svg>
<div style="left:516px;top:461px;width:15px;height:9px;background:#c0c0c0;box-shadow:inset -1px -1px #000,inset 1px 1px #fff,inset -2px -2px #808080;"></div>
<div style="left:516px;top:470px;width:15px;height:10px;background:#c0c0c0;box-shadow:inset -1px -1px #000,inset 1px 1px #fff,inset -2px -2px #808080;"></div>
<svg style="left:516px;top:461px;" width="15" height="19" viewBox="0 0 15 19"><path d="M5 6h5l-2.5-2.5z M5 13h5l-2.5 2.5z" fill="#808080"/></svg>
<div style="left:533px;top:459px;width:111px;height:23px;background:#d0d0d0;box-shadow:inset 1px 1px #808080,inset -2px -2px #fff;"></div>
<span class="t" style="left:464.10px;top:463px;font-size:21.00px;line-height:21.00px;color:rgba(100,175,100,0.72);font-weight:normal;transform:scaleX(0.9118);transform-origin:0 0;">www.cntronics.com</span>
</body></html>
